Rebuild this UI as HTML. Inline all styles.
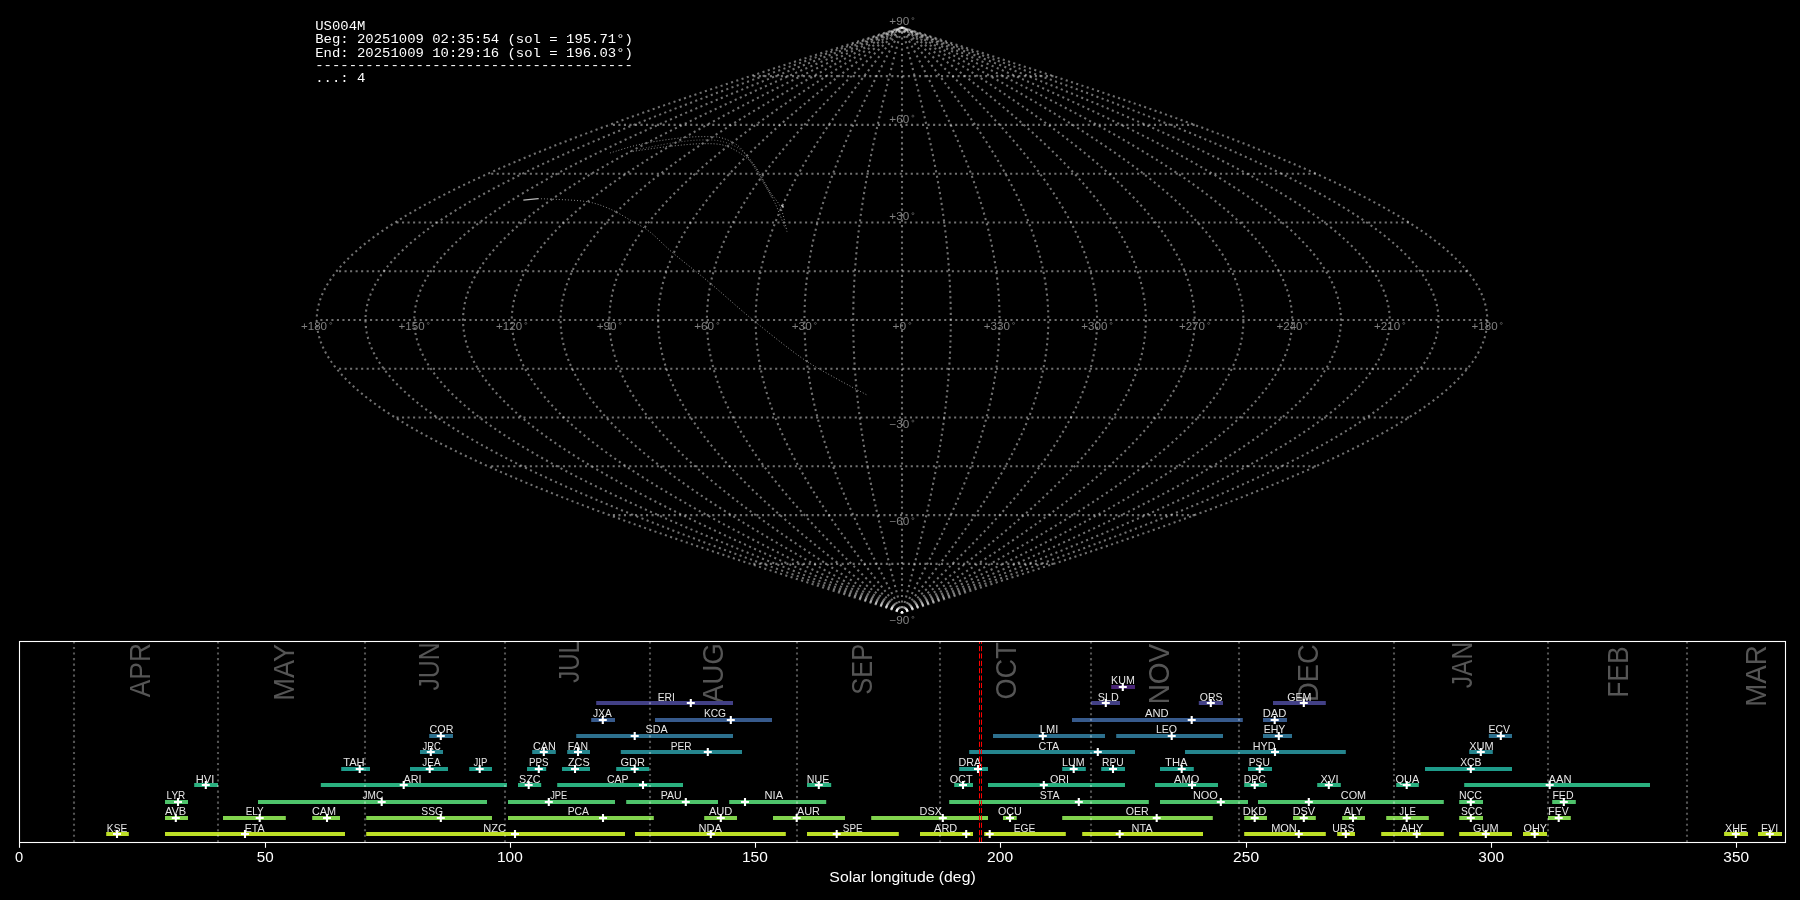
<!DOCTYPE html><html><head><meta charset="utf-8"><style>html,body{margin:0;padding:0;background:#000;overflow:hidden}svg{display:block;will-change:transform}text{font-family:"Liberation Sans",sans-serif}</style></head><body><svg width="1800" height="900" viewBox="0 0 1800 900"><rect x="0" y="0" width="1800" height="900" fill="#000"/><g fill="none" stroke="#ffffff" stroke-opacity="0.44" stroke-width="2.0833" stroke-dasharray="2.0833 3.4375"><path d="M1053.49 563.88L750.51 563.88"/><path d="M1194.65 515.10L609.35 515.10"/><path d="M1315.87 466.33L488.13 466.33"/><path d="M1408.89 417.55L395.11 417.55"/><path d="M1467.36 368.78L336.64 368.78"/><path d="M1487.31 320.00L316.69 320.00"/><path d="M1467.36 271.22L336.64 271.22"/><path d="M1408.89 222.45L395.11 222.45"/><path d="M1315.87 173.67L488.13 173.67"/><path d="M1194.65 124.90L609.35 124.90"/><path d="M1053.49 76.12L750.51 76.12"/><path stroke-dashoffset="1.0" d="M902.00 612.65L912.21 609.40L922.43 606.15L932.63 602.90L942.83 599.65L953.01 596.39L963.18 593.14L973.33 589.89L983.46 586.64L993.56 583.39L1003.64 580.14L1013.68 576.88L1023.69 573.63L1033.67 570.38L1043.60 567.13L1053.49 563.88L1063.33 560.63L1073.13 557.37L1082.87 554.12L1092.56 550.87L1102.19 547.62L1111.75 544.37L1121.26 541.12L1130.70 537.86L1140.07 534.61L1149.36 531.36L1158.58 528.11L1167.72 524.86L1176.78 521.61L1185.76 518.35L1194.65 515.10L1203.45 511.85L1212.16 508.60L1220.78 505.35L1229.30 502.10L1237.72 498.84L1246.03 495.59L1254.25 492.34L1262.35 489.09L1270.35 485.84L1278.23 482.59L1286.00 479.33L1293.65 476.08L1301.18 472.83L1308.59 469.58L1315.87 466.33L1323.03 463.07L1330.07 459.82L1336.97 456.57L1343.74 453.32L1350.37 450.07L1356.87 446.82L1363.23 443.56L1369.45 440.31L1375.52 437.06L1381.45 433.81L1387.24 430.56L1392.88 427.31L1398.37 424.05L1403.71 420.80L1408.89 417.55L1413.92 414.30L1418.79 411.05L1423.51 407.80L1428.07 404.54L1432.47 401.29L1436.70 398.04L1440.78 394.79L1444.69 391.54L1448.43 388.29L1452.01 385.03L1455.42 381.78L1458.66 378.53L1461.73 375.28L1464.63 372.03L1467.36 368.78L1469.92 365.52L1472.30 362.27L1474.52 359.02L1476.55 355.77L1478.41 352.52L1480.10 349.27L1481.61 346.01L1482.94 342.76L1484.10 339.51L1485.08 336.26L1485.88 333.01L1486.50 329.76L1486.95 326.50L1487.22 323.25L1487.31 320.00L1487.22 316.75L1486.95 313.50L1486.50 310.24L1485.88 306.99L1485.08 303.74L1484.10 300.49L1482.94 297.24L1481.61 293.99L1480.10 290.73L1478.41 287.48L1476.55 284.23L1474.52 280.98L1472.30 277.73L1469.92 274.48L1467.36 271.22L1464.63 267.97L1461.73 264.72L1458.66 261.47L1455.42 258.22L1452.01 254.97L1448.43 251.71L1444.69 248.46L1440.78 245.21L1436.70 241.96L1432.47 238.71L1428.07 235.46L1423.51 232.20L1418.79 228.95L1413.92 225.70L1408.89 222.45L1403.71 219.20L1398.37 215.95L1392.88 212.69L1387.24 209.44L1381.45 206.19L1375.52 202.94L1369.45 199.69L1363.23 196.44L1356.87 193.18L1350.37 189.93L1343.74 186.68L1336.97 183.43L1330.07 180.18L1323.03 176.93L1315.87 173.67L1308.59 170.42L1301.18 167.17L1293.65 163.92L1286.00 160.67L1278.23 157.41L1270.35 154.16L1262.35 150.91L1254.25 147.66L1246.03 144.41L1237.72 141.16L1229.30 137.90L1220.78 134.65L1212.16 131.40L1203.45 128.15L1194.65 124.90L1185.76 121.65L1176.78 118.39L1167.72 115.14L1158.58 111.89L1149.36 108.64L1140.07 105.39L1130.70 102.14L1121.26 98.88L1111.75 95.63L1102.19 92.38L1092.56 89.13L1082.87 85.88L1073.13 82.63L1063.33 79.37L1053.49 76.12L1043.60 72.87L1033.67 69.62L1023.69 66.37L1013.68 63.12L1003.64 59.86L993.56 56.61L983.46 53.36L973.33 50.11L963.18 46.86L953.01 43.61L942.83 40.35L932.63 37.10L922.43 33.85L912.21 30.60L902.00 27.35"/><path stroke-dashoffset="1.0" d="M902.00 612.65L911.36 609.40L920.72 606.15L930.08 602.90L939.43 599.65L948.76 596.39L958.08 593.14L967.39 589.89L976.67 586.64L985.93 583.39L995.17 580.14L1004.37 576.88L1013.55 573.63L1022.69 570.38L1031.80 567.13L1040.86 563.88L1049.89 560.63L1058.87 557.37L1067.80 554.12L1076.68 550.87L1085.50 547.62L1094.28 544.37L1102.99 541.12L1111.64 537.86L1120.23 534.61L1128.75 531.36L1137.20 528.11L1145.58 524.86L1153.89 521.61L1162.12 518.35L1170.27 515.10L1178.33 511.85L1186.32 508.60L1194.22 505.35L1202.02 502.10L1209.74 498.84L1217.36 495.59L1224.89 492.34L1232.32 489.09L1239.65 485.84L1246.88 482.59L1254.00 479.33L1261.01 476.08L1267.91 472.83L1274.71 469.58L1281.38 466.33L1287.95 463.07L1294.39 459.82L1300.72 456.57L1306.92 453.32L1313.01 450.07L1318.96 446.82L1324.79 443.56L1330.49 440.31L1336.06 437.06L1341.50 433.81L1346.80 430.56L1351.97 427.31L1357.00 424.05L1361.90 420.80L1366.65 417.55L1371.26 414.30L1375.73 411.05L1380.05 407.80L1384.23 404.54L1388.26 401.29L1392.15 398.04L1395.88 394.79L1399.46 391.54L1402.89 388.29L1406.17 385.03L1409.30 381.78L1412.27 378.53L1415.09 375.28L1417.75 372.03L1420.25 368.78L1422.59 365.52L1424.78 362.27L1426.81 359.02L1428.67 355.77L1430.38 352.52L1431.92 349.27L1433.31 346.01L1434.53 342.76L1435.59 339.51L1436.49 336.26L1437.22 333.01L1437.80 329.76L1438.20 326.50L1438.45 323.25L1438.53 320.00L1438.45 316.75L1438.20 313.50L1437.80 310.24L1437.22 306.99L1436.49 303.74L1435.59 300.49L1434.53 297.24L1433.31 293.99L1431.92 290.73L1430.38 287.48L1428.67 284.23L1426.81 280.98L1424.78 277.73L1422.59 274.48L1420.25 271.22L1417.75 267.97L1415.09 264.72L1412.27 261.47L1409.30 258.22L1406.17 254.97L1402.89 251.71L1399.46 248.46L1395.88 245.21L1392.15 241.96L1388.26 238.71L1384.23 235.46L1380.05 232.20L1375.73 228.95L1371.26 225.70L1366.65 222.45L1361.90 219.20L1357.00 215.95L1351.97 212.69L1346.80 209.44L1341.50 206.19L1336.06 202.94L1330.49 199.69L1324.79 196.44L1318.96 193.18L1313.01 189.93L1306.92 186.68L1300.72 183.43L1294.39 180.18L1287.95 176.93L1281.38 173.67L1274.71 170.42L1267.91 167.17L1261.01 163.92L1254.00 160.67L1246.88 157.41L1239.65 154.16L1232.32 150.91L1224.89 147.66L1217.36 144.41L1209.74 141.16L1202.02 137.90L1194.22 134.65L1186.32 131.40L1178.33 128.15L1170.27 124.90L1162.12 121.65L1153.89 118.39L1145.58 115.14L1137.20 111.89L1128.75 108.64L1120.23 105.39L1111.64 102.14L1102.99 98.88L1094.28 95.63L1085.50 92.38L1076.68 89.13L1067.80 85.88L1058.87 82.63L1049.89 79.37L1040.86 76.12L1031.80 72.87L1022.69 69.62L1013.55 66.37L1004.37 63.12L995.17 59.86L985.93 56.61L976.67 53.36L967.39 50.11L958.08 46.86L948.76 43.61L939.43 40.35L930.08 37.10L920.72 33.85L911.36 30.60L902.00 27.35"/><path stroke-dashoffset="1.0" d="M902.00 612.65L910.51 609.40L919.02 606.15L927.53 602.90L936.02 599.65L944.51 596.39L952.98 593.14L961.44 589.89L969.88 586.64L978.30 583.39L986.70 580.14L995.07 576.88L1003.41 573.63L1011.72 570.38L1020.00 567.13L1028.24 563.88L1036.44 560.63L1044.61 557.37L1052.72 554.12L1060.80 550.87L1068.82 547.62L1076.80 544.37L1084.72 541.12L1092.58 537.86L1100.39 534.61L1108.13 531.36L1115.82 528.11L1123.44 524.86L1130.99 521.61L1138.47 518.35L1145.88 515.10L1153.21 511.85L1160.47 508.60L1167.65 505.35L1174.75 502.10L1181.76 498.84L1188.70 495.59L1195.54 492.34L1202.29 489.09L1208.95 485.84L1215.52 482.59L1222.00 479.33L1228.37 476.08L1234.65 472.83L1240.82 469.58L1246.89 466.33L1252.86 463.07L1258.72 459.82L1264.47 456.57L1270.11 453.32L1275.64 450.07L1281.06 446.82L1286.36 443.56L1291.54 440.31L1296.60 437.06L1301.55 433.81L1306.37 430.56L1311.07 427.31L1315.64 424.05L1320.09 420.80L1324.41 417.55L1328.60 414.30L1332.66 411.05L1336.59 407.80L1340.39 404.54L1344.06 401.29L1347.59 398.04L1350.98 394.79L1354.24 391.54L1357.36 388.29L1360.34 385.03L1363.18 381.78L1365.88 378.53L1368.44 375.28L1370.86 372.03L1373.14 368.78L1375.27 365.52L1377.25 362.27L1379.10 359.02L1380.79 355.77L1382.34 352.52L1383.75 349.27L1385.01 346.01L1386.12 342.76L1387.08 339.51L1387.90 336.26L1388.57 333.01L1389.09 329.76L1389.46 326.50L1389.68 323.25L1389.76 320.00L1389.68 316.75L1389.46 313.50L1389.09 310.24L1388.57 306.99L1387.90 303.74L1387.08 300.49L1386.12 297.24L1385.01 293.99L1383.75 290.73L1382.34 287.48L1380.79 284.23L1379.10 280.98L1377.25 277.73L1375.27 274.48L1373.14 271.22L1370.86 267.97L1368.44 264.72L1365.88 261.47L1363.18 258.22L1360.34 254.97L1357.36 251.71L1354.24 248.46L1350.98 245.21L1347.59 241.96L1344.06 238.71L1340.39 235.46L1336.59 232.20L1332.66 228.95L1328.60 225.70L1324.41 222.45L1320.09 219.20L1315.64 215.95L1311.07 212.69L1306.37 209.44L1301.55 206.19L1296.60 202.94L1291.54 199.69L1286.36 196.44L1281.06 193.18L1275.64 189.93L1270.11 186.68L1264.47 183.43L1258.72 180.18L1252.86 176.93L1246.89 173.67L1240.82 170.42L1234.65 167.17L1228.37 163.92L1222.00 160.67L1215.52 157.41L1208.95 154.16L1202.29 150.91L1195.54 147.66L1188.70 144.41L1181.76 141.16L1174.75 137.90L1167.65 134.65L1160.47 131.40L1153.21 128.15L1145.88 124.90L1138.47 121.65L1130.99 118.39L1123.44 115.14L1115.82 111.89L1108.13 108.64L1100.39 105.39L1092.58 102.14L1084.72 98.88L1076.80 95.63L1068.82 92.38L1060.80 89.13L1052.72 85.88L1044.61 82.63L1036.44 79.37L1028.24 76.12L1020.00 72.87L1011.72 69.62L1003.41 66.37L995.07 63.12L986.70 59.86L978.30 56.61L969.88 53.36L961.44 50.11L952.98 46.86L944.51 43.61L936.02 40.35L927.53 37.10L919.02 33.85L910.51 30.60L902.00 27.35"/><path stroke-dashoffset="1.0" d="M902.00 612.65L909.66 609.40L917.32 606.15L924.97 602.90L932.62 599.65L940.26 596.39L947.89 593.14L955.50 589.89L963.09 586.64L970.67 583.39L978.23 580.14L985.76 576.88L993.27 573.63L1000.75 570.38L1008.20 567.13L1015.62 563.88L1023.00 560.63L1030.35 557.37L1037.65 554.12L1044.92 550.87L1052.14 547.62L1059.32 544.37L1066.44 541.12L1073.52 537.86L1080.55 534.61L1087.52 531.36L1094.44 528.11L1101.29 524.86L1108.09 521.61L1114.82 518.35L1121.49 515.10L1128.09 511.85L1134.62 508.60L1141.09 505.35L1147.47 502.10L1153.79 498.84L1160.03 495.59L1166.18 492.34L1172.26 489.09L1178.26 485.84L1184.17 482.59L1190.00 479.33L1195.73 476.08L1201.38 472.83L1206.94 469.58L1212.41 466.33L1217.78 463.07L1223.05 459.82L1228.23 456.57L1233.30 453.32L1238.28 450.07L1243.15 446.82L1247.92 443.56L1252.58 440.31L1257.14 437.06L1261.59 433.81L1265.93 430.56L1270.16 427.31L1274.28 424.05L1278.28 420.80L1282.17 417.55L1285.94 414.30L1289.60 411.05L1293.13 407.80L1296.55 404.54L1299.85 401.29L1303.03 398.04L1306.08 394.79L1309.01 391.54L1311.82 388.29L1314.51 385.03L1317.06 381.78L1319.49 378.53L1321.80 375.28L1323.97 372.03L1326.02 368.78L1327.94 365.52L1329.73 362.27L1331.39 359.02L1332.91 355.77L1334.31 352.52L1335.57 349.27L1336.71 346.01L1337.71 342.76L1338.57 339.51L1339.31 336.26L1339.91 333.01L1340.38 329.76L1340.71 326.50L1340.91 323.25L1340.98 320.00L1340.91 316.75L1340.71 313.50L1340.38 310.24L1339.91 306.99L1339.31 303.74L1338.57 300.49L1337.71 297.24L1336.71 293.99L1335.57 290.73L1334.31 287.48L1332.91 284.23L1331.39 280.98L1329.73 277.73L1327.94 274.48L1326.02 271.22L1323.97 267.97L1321.80 264.72L1319.49 261.47L1317.06 258.22L1314.51 254.97L1311.82 251.71L1309.01 248.46L1306.08 245.21L1303.03 241.96L1299.85 238.71L1296.55 235.46L1293.13 232.20L1289.60 228.95L1285.94 225.70L1282.17 222.45L1278.28 219.20L1274.28 215.95L1270.16 212.69L1265.93 209.44L1261.59 206.19L1257.14 202.94L1252.58 199.69L1247.92 196.44L1243.15 193.18L1238.28 189.93L1233.30 186.68L1228.23 183.43L1223.05 180.18L1217.78 176.93L1212.41 173.67L1206.94 170.42L1201.38 167.17L1195.73 163.92L1190.00 160.67L1184.17 157.41L1178.26 154.16L1172.26 150.91L1166.18 147.66L1160.03 144.41L1153.79 141.16L1147.47 137.90L1141.09 134.65L1134.62 131.40L1128.09 128.15L1121.49 124.90L1114.82 121.65L1108.09 118.39L1101.29 115.14L1094.44 111.89L1087.52 108.64L1080.55 105.39L1073.52 102.14L1066.44 98.88L1059.32 95.63L1052.14 92.38L1044.92 89.13L1037.65 85.88L1030.35 82.63L1023.00 79.37L1015.62 76.12L1008.20 72.87L1000.75 69.62L993.27 66.37L985.76 63.12L978.23 59.86L970.67 56.61L963.09 53.36L955.50 50.11L947.89 46.86L940.26 43.61L932.62 40.35L924.97 37.10L917.32 33.85L909.66 30.60L902.00 27.35"/><path stroke-dashoffset="1.0" d="M902.00 612.65L908.81 609.40L915.62 606.15L922.42 602.90L929.22 599.65L936.01 596.39L942.79 593.14L949.55 589.89L956.31 586.64L963.04 583.39L969.76 580.14L976.45 576.88L983.13 573.63L989.78 570.38L996.40 567.13L1002.99 563.88L1009.55 560.63L1016.08 557.37L1022.58 554.12L1029.04 550.87L1035.46 547.62L1041.84 544.37L1048.17 541.12L1054.46 537.86L1060.71 534.61L1066.91 531.36L1073.05 528.11L1079.15 524.86L1085.19 521.61L1091.17 518.35L1097.10 515.10L1102.97 511.85L1108.78 508.60L1114.52 505.35L1120.20 502.10L1125.81 498.84L1131.36 495.59L1136.83 492.34L1142.23 489.09L1147.56 485.84L1152.82 482.59L1158.00 479.33L1163.10 476.08L1168.12 472.83L1173.06 469.58L1177.92 466.33L1182.69 463.07L1187.38 459.82L1191.98 456.57L1196.49 453.32L1200.91 450.07L1205.25 446.82L1209.48 443.56L1213.63 440.31L1217.68 437.06L1221.64 433.81L1225.49 430.56L1229.25 427.31L1232.91 424.05L1236.47 420.80L1239.93 417.55L1243.28 414.30L1246.53 411.05L1249.67 407.80L1252.71 404.54L1255.64 401.29L1258.47 398.04L1261.18 394.79L1263.79 391.54L1266.29 388.29L1268.67 385.03L1270.95 381.78L1273.11 378.53L1275.15 375.28L1277.09 372.03L1278.91 368.78L1280.61 365.52L1282.20 362.27L1283.68 359.02L1285.03 355.77L1286.28 352.52L1287.40 349.27L1288.41 346.01L1289.30 342.76L1290.07 339.51L1290.72 336.26L1291.25 333.01L1291.67 329.76L1291.97 326.50L1292.14 323.25L1292.20 320.00L1292.14 316.75L1291.97 313.50L1291.67 310.24L1291.25 306.99L1290.72 303.74L1290.07 300.49L1289.30 297.24L1288.41 293.99L1287.40 290.73L1286.28 287.48L1285.03 284.23L1283.68 280.98L1282.20 277.73L1280.61 274.48L1278.91 271.22L1277.09 267.97L1275.15 264.72L1273.11 261.47L1270.95 258.22L1268.67 254.97L1266.29 251.71L1263.79 248.46L1261.18 245.21L1258.47 241.96L1255.64 238.71L1252.71 235.46L1249.67 232.20L1246.53 228.95L1243.28 225.70L1239.93 222.45L1236.47 219.20L1232.91 215.95L1229.25 212.69L1225.49 209.44L1221.64 206.19L1217.68 202.94L1213.63 199.69L1209.48 196.44L1205.25 193.18L1200.91 189.93L1196.49 186.68L1191.98 183.43L1187.38 180.18L1182.69 176.93L1177.92 173.67L1173.06 170.42L1168.12 167.17L1163.10 163.92L1158.00 160.67L1152.82 157.41L1147.56 154.16L1142.23 150.91L1136.83 147.66L1131.36 144.41L1125.81 141.16L1120.20 137.90L1114.52 134.65L1108.78 131.40L1102.97 128.15L1097.10 124.90L1091.17 121.65L1085.19 118.39L1079.15 115.14L1073.05 111.89L1066.91 108.64L1060.71 105.39L1054.46 102.14L1048.17 98.88L1041.84 95.63L1035.46 92.38L1029.04 89.13L1022.58 85.88L1016.08 82.63L1009.55 79.37L1002.99 76.12L996.40 72.87L989.78 69.62L983.13 66.37L976.45 63.12L969.76 59.86L963.04 56.61L956.31 53.36L949.55 50.11L942.79 46.86L936.01 43.61L929.22 40.35L922.42 37.10L915.62 33.85L908.81 30.60L902.00 27.35"/><path stroke-dashoffset="1.0" d="M902.00 612.65L907.96 609.40L913.92 606.15L919.87 602.90L925.82 599.65L931.76 596.39L937.69 593.14L943.61 589.89L949.52 586.64L955.41 583.39L961.29 580.14L967.15 576.88L972.99 573.63L978.80 570.38L984.60 567.13L990.37 563.88L996.11 560.63L1001.82 557.37L1007.51 554.12L1013.16 550.87L1018.78 547.62L1024.36 544.37L1029.90 541.12L1035.41 537.86L1040.87 534.61L1046.29 531.36L1051.67 528.11L1057.01 524.86L1062.29 521.61L1067.53 518.35L1072.71 515.10L1077.85 511.85L1082.93 508.60L1087.96 505.35L1092.92 502.10L1097.84 498.84L1102.69 495.59L1107.48 492.34L1112.20 489.09L1116.87 485.84L1121.47 482.59L1126.00 479.33L1130.46 476.08L1134.85 472.83L1139.18 469.58L1143.43 466.33L1147.60 463.07L1151.70 459.82L1155.73 456.57L1159.68 453.32L1163.55 450.07L1167.34 446.82L1171.05 443.56L1174.68 440.31L1178.22 437.06L1181.68 433.81L1185.06 430.56L1188.35 427.31L1191.55 424.05L1194.66 420.80L1197.69 417.55L1200.62 414.30L1203.46 411.05L1206.22 407.80L1208.87 404.54L1211.44 401.29L1213.91 398.04L1216.29 394.79L1218.57 391.54L1220.75 388.29L1222.84 385.03L1224.83 381.78L1226.72 378.53L1228.51 375.28L1230.20 372.03L1231.79 368.78L1233.29 365.52L1234.68 362.27L1235.97 359.02L1237.16 355.77L1238.24 352.52L1239.22 349.27L1240.11 346.01L1240.88 342.76L1241.56 339.51L1242.13 336.26L1242.60 333.01L1242.96 329.76L1243.22 326.50L1243.38 323.25L1243.43 320.00L1243.38 316.75L1243.22 313.50L1242.96 310.24L1242.60 306.99L1242.13 303.74L1241.56 300.49L1240.88 297.24L1240.11 293.99L1239.22 290.73L1238.24 287.48L1237.16 284.23L1235.97 280.98L1234.68 277.73L1233.29 274.48L1231.79 271.22L1230.20 267.97L1228.51 264.72L1226.72 261.47L1224.83 258.22L1222.84 254.97L1220.75 251.71L1218.57 248.46L1216.29 245.21L1213.91 241.96L1211.44 238.71L1208.87 235.46L1206.22 232.20L1203.46 228.95L1200.62 225.70L1197.69 222.45L1194.66 219.20L1191.55 215.95L1188.35 212.69L1185.06 209.44L1181.68 206.19L1178.22 202.94L1174.68 199.69L1171.05 196.44L1167.34 193.18L1163.55 189.93L1159.68 186.68L1155.73 183.43L1151.70 180.18L1147.60 176.93L1143.43 173.67L1139.18 170.42L1134.85 167.17L1130.46 163.92L1126.00 160.67L1121.47 157.41L1116.87 154.16L1112.20 150.91L1107.48 147.66L1102.69 144.41L1097.84 141.16L1092.92 137.90L1087.96 134.65L1082.93 131.40L1077.85 128.15L1072.71 124.90L1067.53 121.65L1062.29 118.39L1057.01 115.14L1051.67 111.89L1046.29 108.64L1040.87 105.39L1035.41 102.14L1029.90 98.88L1024.36 95.63L1018.78 92.38L1013.16 89.13L1007.51 85.88L1001.82 82.63L996.11 79.37L990.37 76.12L984.60 72.87L978.80 69.62L972.99 66.37L967.15 63.12L961.29 59.86L955.41 56.61L949.52 53.36L943.61 50.11L937.69 46.86L931.76 43.61L925.82 40.35L919.87 37.10L913.92 33.85L907.96 30.60L902.00 27.35"/><path stroke-dashoffset="1.0" d="M902.00 612.65L907.11 609.40L912.21 606.15L917.32 602.90L922.41 599.65L927.51 596.39L932.59 593.14L937.67 589.89L942.73 586.64L947.78 583.39L952.82 580.14L957.84 576.88L962.85 573.63L967.83 570.38L972.80 567.13L977.74 563.88L982.67 560.63L987.56 557.37L992.43 554.12L997.28 550.87L1002.09 547.62L1006.88 544.37L1011.63 541.12L1016.35 537.86L1021.03 534.61L1025.68 531.36L1030.29 528.11L1034.86 524.86L1039.39 521.61L1043.88 518.35L1048.33 515.10L1052.73 511.85L1057.08 508.60L1061.39 505.35L1065.65 502.10L1069.86 498.84L1074.02 495.59L1078.12 492.34L1082.18 489.09L1086.17 485.84L1090.11 482.59L1094.00 479.33L1097.82 476.08L1101.59 472.83L1105.29 469.58L1108.94 466.33L1112.52 463.07L1116.03 459.82L1119.48 456.57L1122.87 453.32L1126.19 450.07L1129.43 446.82L1132.61 443.56L1135.72 440.31L1138.76 437.06L1141.73 433.81L1144.62 430.56L1147.44 427.31L1150.18 424.05L1152.85 420.80L1155.44 417.55L1157.96 414.30L1160.40 411.05L1162.76 407.80L1165.03 404.54L1167.23 401.29L1169.35 398.04L1171.39 394.79L1173.34 391.54L1175.22 388.29L1177.00 385.03L1178.71 381.78L1180.33 378.53L1181.87 375.28L1183.32 372.03L1184.68 368.78L1185.96 365.52L1187.15 362.27L1188.26 359.02L1189.28 355.77L1190.21 352.52L1191.05 349.27L1191.80 346.01L1192.47 342.76L1193.05 339.51L1193.54 336.26L1193.94 333.01L1194.25 329.76L1194.47 326.50L1194.61 323.25L1194.65 320.00L1194.61 316.75L1194.47 313.50L1194.25 310.24L1193.94 306.99L1193.54 303.74L1193.05 300.49L1192.47 297.24L1191.80 293.99L1191.05 290.73L1190.21 287.48L1189.28 284.23L1188.26 280.98L1187.15 277.73L1185.96 274.48L1184.68 271.22L1183.32 267.97L1181.87 264.72L1180.33 261.47L1178.71 258.22L1177.00 254.97L1175.22 251.71L1173.34 248.46L1171.39 245.21L1169.35 241.96L1167.23 238.71L1165.03 235.46L1162.76 232.20L1160.40 228.95L1157.96 225.70L1155.44 222.45L1152.85 219.20L1150.18 215.95L1147.44 212.69L1144.62 209.44L1141.73 206.19L1138.76 202.94L1135.72 199.69L1132.61 196.44L1129.43 193.18L1126.19 189.93L1122.87 186.68L1119.48 183.43L1116.03 180.18L1112.52 176.93L1108.94 173.67L1105.29 170.42L1101.59 167.17L1097.82 163.92L1094.00 160.67L1090.11 157.41L1086.17 154.16L1082.18 150.91L1078.12 147.66L1074.02 144.41L1069.86 141.16L1065.65 137.90L1061.39 134.65L1057.08 131.40L1052.73 128.15L1048.33 124.90L1043.88 121.65L1039.39 118.39L1034.86 115.14L1030.29 111.89L1025.68 108.64L1021.03 105.39L1016.35 102.14L1011.63 98.88L1006.88 95.63L1002.09 92.38L997.28 89.13L992.43 85.88L987.56 82.63L982.67 79.37L977.74 76.12L972.80 72.87L967.83 69.62L962.85 66.37L957.84 63.12L952.82 59.86L947.78 56.61L942.73 53.36L937.67 50.11L932.59 46.86L927.51 43.61L922.41 40.35L917.32 37.10L912.21 33.85L907.11 30.60L902.00 27.35"/><path stroke-dashoffset="1.0" d="M902.00 612.65L906.26 609.40L910.51 606.15L914.76 602.90L919.01 599.65L923.26 596.39L927.49 593.14L931.72 589.89L935.94 586.64L940.15 583.39L944.35 580.14L948.53 576.88L952.70 573.63L956.86 570.38L961.00 567.13L965.12 563.88L969.22 560.63L973.30 557.37L977.36 554.12L981.40 550.87L985.41 547.62L989.40 544.37L993.36 541.12L997.29 537.86L1001.19 534.61L1005.07 531.36L1008.91 528.11L1012.72 524.86L1016.49 521.61L1020.23 518.35L1023.94 515.10L1027.61 511.85L1031.24 508.60L1034.83 505.35L1038.37 502.10L1041.88 498.84L1045.35 495.59L1048.77 492.34L1052.15 489.09L1055.48 485.84L1058.76 482.59L1062.00 479.33L1065.19 476.08L1068.32 472.83L1071.41 469.58L1074.45 466.33L1077.43 463.07L1080.36 459.82L1083.24 456.57L1086.06 453.32L1088.82 450.07L1091.53 446.82L1094.18 443.56L1096.77 440.31L1099.30 437.06L1101.77 433.81L1104.18 430.56L1106.53 427.31L1108.82 424.05L1111.04 420.80L1113.20 417.55L1115.30 414.30L1117.33 411.05L1119.30 407.80L1121.20 404.54L1123.03 401.29L1124.79 398.04L1126.49 394.79L1128.12 391.54L1129.68 388.29L1131.17 385.03L1132.59 381.78L1133.94 378.53L1135.22 375.28L1136.43 372.03L1137.57 368.78L1138.63 365.52L1139.63 362.27L1140.55 359.02L1141.40 355.77L1142.17 352.52L1142.87 349.27L1143.50 346.01L1144.06 342.76L1144.54 339.51L1144.95 336.26L1145.28 333.01L1145.54 329.76L1145.73 326.50L1145.84 323.25L1145.88 320.00L1145.84 316.75L1145.73 313.50L1145.54 310.24L1145.28 306.99L1144.95 303.74L1144.54 300.49L1144.06 297.24L1143.50 293.99L1142.87 290.73L1142.17 287.48L1141.40 284.23L1140.55 280.98L1139.63 277.73L1138.63 274.48L1137.57 271.22L1136.43 267.97L1135.22 264.72L1133.94 261.47L1132.59 258.22L1131.17 254.97L1129.68 251.71L1128.12 248.46L1126.49 245.21L1124.79 241.96L1123.03 238.71L1121.20 235.46L1119.30 232.20L1117.33 228.95L1115.30 225.70L1113.20 222.45L1111.04 219.20L1108.82 215.95L1106.53 212.69L1104.18 209.44L1101.77 206.19L1099.30 202.94L1096.77 199.69L1094.18 196.44L1091.53 193.18L1088.82 189.93L1086.06 186.68L1083.24 183.43L1080.36 180.18L1077.43 176.93L1074.45 173.67L1071.41 170.42L1068.32 167.17L1065.19 163.92L1062.00 160.67L1058.76 157.41L1055.48 154.16L1052.15 150.91L1048.77 147.66L1045.35 144.41L1041.88 141.16L1038.37 137.90L1034.83 134.65L1031.24 131.40L1027.61 128.15L1023.94 124.90L1020.23 121.65L1016.49 118.39L1012.72 115.14L1008.91 111.89L1005.07 108.64L1001.19 105.39L997.29 102.14L993.36 98.88L989.40 95.63L985.41 92.38L981.40 89.13L977.36 85.88L973.30 82.63L969.22 79.37L965.12 76.12L961.00 72.87L956.86 69.62L952.70 66.37L948.53 63.12L944.35 59.86L940.15 56.61L935.94 53.36L931.72 50.11L927.49 46.86L923.26 43.61L919.01 40.35L914.76 37.10L910.51 33.85L906.26 30.60L902.00 27.35"/><path stroke-dashoffset="1.0" d="M902.00 612.65L905.40 609.40L908.81 606.15L912.21 602.90L915.61 599.65L919.00 596.39L922.39 593.14L925.78 589.89L929.15 586.64L932.52 583.39L935.88 580.14L939.23 576.88L942.56 573.63L945.89 570.38L949.20 567.13L952.50 563.88L955.78 560.63L959.04 557.37L962.29 554.12L965.52 550.87L968.73 547.62L971.92 544.37L975.09 541.12L978.23 537.86L981.36 534.61L984.45 531.36L987.53 528.11L990.57 524.86L993.59 521.61L996.59 518.35L999.55 515.10L1002.48 511.85L1005.39 508.60L1008.26 505.35L1011.10 502.10L1013.91 498.84L1016.68 495.59L1019.42 492.34L1022.12 489.09L1024.78 485.84L1027.41 482.59L1030.00 479.33L1032.55 476.08L1035.06 472.83L1037.53 469.58L1039.96 466.33L1042.34 463.07L1044.69 459.82L1046.99 456.57L1049.25 453.32L1051.46 450.07L1053.62 446.82L1055.74 443.56L1057.82 440.31L1059.84 437.06L1061.82 433.81L1063.75 430.56L1065.63 427.31L1067.46 424.05L1069.24 420.80L1070.96 417.55L1072.64 414.30L1074.26 411.05L1075.84 407.80L1077.36 404.54L1078.82 401.29L1080.23 398.04L1081.59 394.79L1082.90 391.54L1084.14 388.29L1085.34 385.03L1086.47 381.78L1087.55 378.53L1088.58 375.28L1089.54 372.03L1090.45 368.78L1091.31 365.52L1092.10 362.27L1092.84 359.02L1093.52 355.77L1094.14 352.52L1094.70 349.27L1095.20 346.01L1095.65 342.76L1096.03 339.51L1096.36 336.26L1096.63 333.01L1096.83 329.76L1096.98 326.50L1097.07 323.25L1097.10 320.00L1097.07 316.75L1096.98 313.50L1096.83 310.24L1096.63 306.99L1096.36 303.74L1096.03 300.49L1095.65 297.24L1095.20 293.99L1094.70 290.73L1094.14 287.48L1093.52 284.23L1092.84 280.98L1092.10 277.73L1091.31 274.48L1090.45 271.22L1089.54 267.97L1088.58 264.72L1087.55 261.47L1086.47 258.22L1085.34 254.97L1084.14 251.71L1082.90 248.46L1081.59 245.21L1080.23 241.96L1078.82 238.71L1077.36 235.46L1075.84 232.20L1074.26 228.95L1072.64 225.70L1070.96 222.45L1069.24 219.20L1067.46 215.95L1065.63 212.69L1063.75 209.44L1061.82 206.19L1059.84 202.94L1057.82 199.69L1055.74 196.44L1053.62 193.18L1051.46 189.93L1049.25 186.68L1046.99 183.43L1044.69 180.18L1042.34 176.93L1039.96 173.67L1037.53 170.42L1035.06 167.17L1032.55 163.92L1030.00 160.67L1027.41 157.41L1024.78 154.16L1022.12 150.91L1019.42 147.66L1016.68 144.41L1013.91 141.16L1011.10 137.90L1008.26 134.65L1005.39 131.40L1002.48 128.15L999.55 124.90L996.59 121.65L993.59 118.39L990.57 115.14L987.53 111.89L984.45 108.64L981.36 105.39L978.23 102.14L975.09 98.88L971.92 95.63L968.73 92.38L965.52 89.13L962.29 85.88L959.04 82.63L955.78 79.37L952.50 76.12L949.20 72.87L945.89 69.62L942.56 66.37L939.23 63.12L935.88 59.86L932.52 56.61L929.15 53.36L925.78 50.11L922.39 46.86L919.00 43.61L915.61 40.35L912.21 37.10L908.81 33.85L905.40 30.60L902.00 27.35"/><path stroke-dashoffset="1.0" d="M902.00 612.65L904.55 609.40L907.11 606.15L909.66 602.90L912.21 599.65L914.75 596.39L917.30 593.14L919.83 589.89L922.36 586.64L924.89 583.39L927.41 580.14L929.92 576.88L932.42 573.63L934.92 570.38L937.40 567.13L939.87 563.88L942.33 560.63L944.78 557.37L947.22 554.12L949.64 550.87L952.05 547.62L954.44 544.37L956.81 541.12L959.17 537.86L961.52 534.61L963.84 531.36L966.15 528.11L968.43 524.86L970.70 521.61L972.94 518.35L975.16 515.10L977.36 511.85L979.54 508.60L981.70 505.35L983.82 502.10L985.93 498.84L988.01 495.59L990.06 492.34L992.09 489.09L994.09 485.84L996.06 482.59L998.00 479.33L999.91 476.08L1001.79 472.83L1003.65 469.58L1005.47 466.33L1007.26 463.07L1009.02 459.82L1010.74 456.57L1012.43 453.32L1014.09 450.07L1015.72 446.82L1017.31 443.56L1018.86 440.31L1020.38 437.06L1021.86 433.81L1023.31 430.56L1024.72 427.31L1026.09 424.05L1027.43 420.80L1028.72 417.55L1029.98 414.30L1031.20 411.05L1032.38 407.80L1033.52 404.54L1034.62 401.29L1035.68 398.04L1036.69 394.79L1037.67 391.54L1038.61 388.29L1039.50 385.03L1040.35 381.78L1041.16 378.53L1041.93 375.28L1042.66 372.03L1043.34 368.78L1043.98 365.52L1044.58 362.27L1045.13 359.02L1045.64 355.77L1046.10 352.52L1046.52 349.27L1046.90 346.01L1047.24 342.76L1047.52 339.51L1047.77 336.26L1047.97 333.01L1048.13 329.76L1048.24 326.50L1048.30 323.25L1048.33 320.00L1048.30 316.75L1048.24 313.50L1048.13 310.24L1047.97 306.99L1047.77 303.74L1047.52 300.49L1047.24 297.24L1046.90 293.99L1046.52 290.73L1046.10 287.48L1045.64 284.23L1045.13 280.98L1044.58 277.73L1043.98 274.48L1043.34 271.22L1042.66 267.97L1041.93 264.72L1041.16 261.47L1040.35 258.22L1039.50 254.97L1038.61 251.71L1037.67 248.46L1036.69 245.21L1035.68 241.96L1034.62 238.71L1033.52 235.46L1032.38 232.20L1031.20 228.95L1029.98 225.70L1028.72 222.45L1027.43 219.20L1026.09 215.95L1024.72 212.69L1023.31 209.44L1021.86 206.19L1020.38 202.94L1018.86 199.69L1017.31 196.44L1015.72 193.18L1014.09 189.93L1012.43 186.68L1010.74 183.43L1009.02 180.18L1007.26 176.93L1005.47 173.67L1003.65 170.42L1001.79 167.17L999.91 163.92L998.00 160.67L996.06 157.41L994.09 154.16L992.09 150.91L990.06 147.66L988.01 144.41L985.93 141.16L983.82 137.90L981.70 134.65L979.54 131.40L977.36 128.15L975.16 124.90L972.94 121.65L970.70 118.39L968.43 115.14L966.15 111.89L963.84 108.64L961.52 105.39L959.17 102.14L956.81 98.88L954.44 95.63L952.05 92.38L949.64 89.13L947.22 85.88L944.78 82.63L942.33 79.37L939.87 76.12L937.40 72.87L934.92 69.62L932.42 66.37L929.92 63.12L927.41 59.86L924.89 56.61L922.36 53.36L919.83 50.11L917.30 46.86L914.75 43.61L912.21 40.35L909.66 37.10L907.11 33.85L904.55 30.60L902.00 27.35"/><path stroke-dashoffset="1.0" d="M902.00 612.65L903.70 609.40L905.40 606.15L907.11 602.90L908.80 599.65L910.50 596.39L912.20 593.14L913.89 589.89L915.58 586.64L917.26 583.39L918.94 580.14L920.61 576.88L922.28 573.63L923.94 570.38L925.60 567.13L927.25 563.88L928.89 560.63L930.52 557.37L932.14 554.12L933.76 550.87L935.36 547.62L936.96 544.37L938.54 541.12L940.12 537.86L941.68 534.61L943.23 531.36L944.76 528.11L946.29 524.86L947.80 521.61L949.29 518.35L950.78 515.10L952.24 511.85L953.69 508.60L955.13 505.35L956.55 502.10L957.95 498.84L959.34 495.59L960.71 492.34L962.06 489.09L963.39 485.84L964.70 482.59L966.00 479.33L967.27 476.08L968.53 472.83L969.76 469.58L970.98 466.33L972.17 463.07L973.34 459.82L974.49 456.57L975.62 453.32L976.73 450.07L977.81 446.82L978.87 443.56L979.91 440.31L980.92 437.06L981.91 433.81L982.87 430.56L983.81 427.31L984.73 424.05L985.62 420.80L986.48 417.55L987.32 414.30L988.13 411.05L988.92 407.80L989.68 404.54L990.41 401.29L991.12 398.04L991.80 394.79L992.45 391.54L993.07 388.29L993.67 385.03L994.24 381.78L994.78 378.53L995.29 375.28L995.77 372.03L996.23 368.78L996.65 365.52L997.05 362.27L997.42 359.02L997.76 355.77L998.07 352.52L998.35 349.27L998.60 346.01L998.82 342.76L999.02 339.51L999.18 336.26L999.31 333.01L999.42 329.76L999.49 326.50L999.54 323.25L999.55 320.00L999.54 316.75L999.49 313.50L999.42 310.24L999.31 306.99L999.18 303.74L999.02 300.49L998.82 297.24L998.60 293.99L998.35 290.73L998.07 287.48L997.76 284.23L997.42 280.98L997.05 277.73L996.65 274.48L996.23 271.22L995.77 267.97L995.29 264.72L994.78 261.47L994.24 258.22L993.67 254.97L993.07 251.71L992.45 248.46L991.80 245.21L991.12 241.96L990.41 238.71L989.68 235.46L988.92 232.20L988.13 228.95L987.32 225.70L986.48 222.45L985.62 219.20L984.73 215.95L983.81 212.69L982.87 209.44L981.91 206.19L980.92 202.94L979.91 199.69L978.87 196.44L977.81 193.18L976.73 189.93L975.62 186.68L974.49 183.43L973.34 180.18L972.17 176.93L970.98 173.67L969.76 170.42L968.53 167.17L967.27 163.92L966.00 160.67L964.70 157.41L963.39 154.16L962.06 150.91L960.71 147.66L959.34 144.41L957.95 141.16L956.55 137.90L955.13 134.65L953.69 131.40L952.24 128.15L950.78 124.90L949.29 121.65L947.80 118.39L946.29 115.14L944.76 111.89L943.23 108.64L941.68 105.39L940.12 102.14L938.54 98.88L936.96 95.63L935.36 92.38L933.76 89.13L932.14 85.88L930.52 82.63L928.89 79.37L927.25 76.12L925.60 72.87L923.94 69.62L922.28 66.37L920.61 63.12L918.94 59.86L917.26 56.61L915.58 53.36L913.89 50.11L912.20 46.86L910.50 43.61L908.80 40.35L907.11 37.10L905.40 33.85L903.70 30.60L902.00 27.35"/><path stroke-dashoffset="1.0" d="M902.00 612.65L902.85 609.40L903.70 606.15L904.55 602.90L905.40 599.65L906.25 596.39L907.10 593.14L907.94 589.89L908.79 586.64L909.63 583.39L910.47 580.14L911.31 576.88L912.14 573.63L912.97 570.38L913.80 567.13L914.62 563.88L915.44 560.63L916.26 557.37L917.07 554.12L917.88 550.87L918.68 547.62L919.48 544.37L920.27 541.12L921.06 537.86L921.84 534.61L922.61 531.36L923.38 528.11L924.14 524.86L924.90 521.61L925.65 518.35L926.39 515.10L927.12 511.85L927.85 508.60L928.57 505.35L929.27 502.10L929.98 498.84L930.67 495.59L931.35 492.34L932.03 489.09L932.70 485.84L933.35 482.59L934.00 479.33L934.64 476.08L935.26 472.83L935.88 469.58L936.49 466.33L937.09 463.07L937.67 459.82L938.25 456.57L938.81 453.32L939.36 450.07L939.91 446.82L940.44 443.56L940.95 440.31L941.46 437.06L941.95 433.81L942.44 430.56L942.91 427.31L943.36 424.05L943.81 420.80L944.24 417.55L944.66 414.30L945.07 411.05L945.46 407.80L945.84 404.54L946.21 401.29L946.56 398.04L946.90 394.79L947.22 391.54L947.54 388.29L947.83 385.03L948.12 381.78L948.39 378.53L948.64 375.28L948.89 372.03L949.11 368.78L949.33 365.52L949.53 362.27L949.71 359.02L949.88 355.77L950.03 352.52L950.17 349.27L950.30 346.01L950.41 342.76L950.51 339.51L950.59 336.26L950.66 333.01L950.71 329.76L950.75 326.50L950.77 323.25L950.78 320.00L950.77 316.75L950.75 313.50L950.71 310.24L950.66 306.99L950.59 303.74L950.51 300.49L950.41 297.24L950.30 293.99L950.17 290.73L950.03 287.48L949.88 284.23L949.71 280.98L949.53 277.73L949.33 274.48L949.11 271.22L948.89 267.97L948.64 264.72L948.39 261.47L948.12 258.22L947.83 254.97L947.54 251.71L947.22 248.46L946.90 245.21L946.56 241.96L946.21 238.71L945.84 235.46L945.46 232.20L945.07 228.95L944.66 225.70L944.24 222.45L943.81 219.20L943.36 215.95L942.91 212.69L942.44 209.44L941.95 206.19L941.46 202.94L940.95 199.69L940.44 196.44L939.91 193.18L939.36 189.93L938.81 186.68L938.25 183.43L937.67 180.18L937.09 176.93L936.49 173.67L935.88 170.42L935.26 167.17L934.64 163.92L934.00 160.67L933.35 157.41L932.70 154.16L932.03 150.91L931.35 147.66L930.67 144.41L929.98 141.16L929.27 137.90L928.57 134.65L927.85 131.40L927.12 128.15L926.39 124.90L925.65 121.65L924.90 118.39L924.14 115.14L923.38 111.89L922.61 108.64L921.84 105.39L921.06 102.14L920.27 98.88L919.48 95.63L918.68 92.38L917.88 89.13L917.07 85.88L916.26 82.63L915.44 79.37L914.62 76.12L913.80 72.87L912.97 69.62L912.14 66.37L911.31 63.12L910.47 59.86L909.63 56.61L908.79 53.36L907.94 50.11L907.10 46.86L906.25 43.61L905.40 40.35L904.55 37.10L903.70 33.85L902.85 30.60L902.00 27.35"/><path stroke-dashoffset="1.0" d="M902.00 612.65L902.00 609.40L902.00 606.15L902.00 602.90L902.00 599.65L902.00 596.39L902.00 593.14L902.00 589.89L902.00 586.64L902.00 583.39L902.00 580.14L902.00 576.88L902.00 573.63L902.00 570.38L902.00 567.13L902.00 563.88L902.00 560.63L902.00 557.37L902.00 554.12L902.00 550.87L902.00 547.62L902.00 544.37L902.00 541.12L902.00 537.86L902.00 534.61L902.00 531.36L902.00 528.11L902.00 524.86L902.00 521.61L902.00 518.35L902.00 515.10L902.00 511.85L902.00 508.60L902.00 505.35L902.00 502.10L902.00 498.84L902.00 495.59L902.00 492.34L902.00 489.09L902.00 485.84L902.00 482.59L902.00 479.33L902.00 476.08L902.00 472.83L902.00 469.58L902.00 466.33L902.00 463.07L902.00 459.82L902.00 456.57L902.00 453.32L902.00 450.07L902.00 446.82L902.00 443.56L902.00 440.31L902.00 437.06L902.00 433.81L902.00 430.56L902.00 427.31L902.00 424.05L902.00 420.80L902.00 417.55L902.00 414.30L902.00 411.05L902.00 407.80L902.00 404.54L902.00 401.29L902.00 398.04L902.00 394.79L902.00 391.54L902.00 388.29L902.00 385.03L902.00 381.78L902.00 378.53L902.00 375.28L902.00 372.03L902.00 368.78L902.00 365.52L902.00 362.27L902.00 359.02L902.00 355.77L902.00 352.52L902.00 349.27L902.00 346.01L902.00 342.76L902.00 339.51L902.00 336.26L902.00 333.01L902.00 329.76L902.00 326.50L902.00 323.25L902.00 320.00L902.00 316.75L902.00 313.50L902.00 310.24L902.00 306.99L902.00 303.74L902.00 300.49L902.00 297.24L902.00 293.99L902.00 290.73L902.00 287.48L902.00 284.23L902.00 280.98L902.00 277.73L902.00 274.48L902.00 271.22L902.00 267.97L902.00 264.72L902.00 261.47L902.00 258.22L902.00 254.97L902.00 251.71L902.00 248.46L902.00 245.21L902.00 241.96L902.00 238.71L902.00 235.46L902.00 232.20L902.00 228.95L902.00 225.70L902.00 222.45L902.00 219.20L902.00 215.95L902.00 212.69L902.00 209.44L902.00 206.19L902.00 202.94L902.00 199.69L902.00 196.44L902.00 193.18L902.00 189.93L902.00 186.68L902.00 183.43L902.00 180.18L902.00 176.93L902.00 173.67L902.00 170.42L902.00 167.17L902.00 163.92L902.00 160.67L902.00 157.41L902.00 154.16L902.00 150.91L902.00 147.66L902.00 144.41L902.00 141.16L902.00 137.90L902.00 134.65L902.00 131.40L902.00 128.15L902.00 124.90L902.00 121.65L902.00 118.39L902.00 115.14L902.00 111.89L902.00 108.64L902.00 105.39L902.00 102.14L902.00 98.88L902.00 95.63L902.00 92.38L902.00 89.13L902.00 85.88L902.00 82.63L902.00 79.37L902.00 76.12L902.00 72.87L902.00 69.62L902.00 66.37L902.00 63.12L902.00 59.86L902.00 56.61L902.00 53.36L902.00 50.11L902.00 46.86L902.00 43.61L902.00 40.35L902.00 37.10L902.00 33.85L902.00 30.60L902.00 27.35"/><path stroke-dashoffset="1.0" d="M902.00 612.65L901.15 609.40L900.30 606.15L899.45 602.90L898.60 599.65L897.75 596.39L896.90 593.14L896.06 589.89L895.21 586.64L894.37 583.39L893.53 580.14L892.69 576.88L891.86 573.63L891.03 570.38L890.20 567.13L889.38 563.88L888.56 560.63L887.74 557.37L886.93 554.12L886.12 550.87L885.32 547.62L884.52 544.37L883.73 541.12L882.94 537.86L882.16 534.61L881.39 531.36L880.62 528.11L879.86 524.86L879.10 521.61L878.35 518.35L877.61 515.10L876.88 511.85L876.15 508.60L875.43 505.35L874.73 502.10L874.02 498.84L873.33 495.59L872.65 492.34L871.97 489.09L871.30 485.84L870.65 482.59L870.00 479.33L869.36 476.08L868.74 472.83L868.12 469.58L867.51 466.33L866.91 463.07L866.33 459.82L865.75 456.57L865.19 453.32L864.64 450.07L864.09 446.82L863.56 443.56L863.05 440.31L862.54 437.06L862.05 433.81L861.56 430.56L861.09 427.31L860.64 424.05L860.19 420.80L859.76 417.55L859.34 414.30L858.93 411.05L858.54 407.80L858.16 404.54L857.79 401.29L857.44 398.04L857.10 394.79L856.78 391.54L856.46 388.29L856.17 385.03L855.88 381.78L855.61 378.53L855.36 375.28L855.11 372.03L854.89 368.78L854.67 365.52L854.47 362.27L854.29 359.02L854.12 355.77L853.97 352.52L853.83 349.27L853.70 346.01L853.59 342.76L853.49 339.51L853.41 336.26L853.34 333.01L853.29 329.76L853.25 326.50L853.23 323.25L853.22 320.00L853.23 316.75L853.25 313.50L853.29 310.24L853.34 306.99L853.41 303.74L853.49 300.49L853.59 297.24L853.70 293.99L853.83 290.73L853.97 287.48L854.12 284.23L854.29 280.98L854.47 277.73L854.67 274.48L854.89 271.22L855.11 267.97L855.36 264.72L855.61 261.47L855.88 258.22L856.17 254.97L856.46 251.71L856.78 248.46L857.10 245.21L857.44 241.96L857.79 238.71L858.16 235.46L858.54 232.20L858.93 228.95L859.34 225.70L859.76 222.45L860.19 219.20L860.64 215.95L861.09 212.69L861.56 209.44L862.05 206.19L862.54 202.94L863.05 199.69L863.56 196.44L864.09 193.18L864.64 189.93L865.19 186.68L865.75 183.43L866.33 180.18L866.91 176.93L867.51 173.67L868.12 170.42L868.74 167.17L869.36 163.92L870.00 160.67L870.65 157.41L871.30 154.16L871.97 150.91L872.65 147.66L873.33 144.41L874.02 141.16L874.73 137.90L875.43 134.65L876.15 131.40L876.88 128.15L877.61 124.90L878.35 121.65L879.10 118.39L879.86 115.14L880.62 111.89L881.39 108.64L882.16 105.39L882.94 102.14L883.73 98.88L884.52 95.63L885.32 92.38L886.12 89.13L886.93 85.88L887.74 82.63L888.56 79.37L889.38 76.12L890.20 72.87L891.03 69.62L891.86 66.37L892.69 63.12L893.53 59.86L894.37 56.61L895.21 53.36L896.06 50.11L896.90 46.86L897.75 43.61L898.60 40.35L899.45 37.10L900.30 33.85L901.15 30.60L902.00 27.35"/><path stroke-dashoffset="1.0" d="M902.00 612.65L900.30 609.40L898.60 606.15L896.89 602.90L895.20 599.65L893.50 596.39L891.80 593.14L890.11 589.89L888.42 586.64L886.74 583.39L885.06 580.14L883.39 576.88L881.72 573.63L880.06 570.38L878.40 567.13L876.75 563.88L875.11 560.63L873.48 557.37L871.86 554.12L870.24 550.87L868.64 547.62L867.04 544.37L865.46 541.12L863.88 537.86L862.32 534.61L860.77 531.36L859.24 528.11L857.71 524.86L856.20 521.61L854.71 518.35L853.22 515.10L851.76 511.85L850.31 508.60L848.87 505.35L847.45 502.10L846.05 498.84L844.66 495.59L843.29 492.34L841.94 489.09L840.61 485.84L839.30 482.59L838.00 479.33L836.73 476.08L835.47 472.83L834.24 469.58L833.02 466.33L831.83 463.07L830.66 459.82L829.51 456.57L828.38 453.32L827.27 450.07L826.19 446.82L825.13 443.56L824.09 440.31L823.08 437.06L822.09 433.81L821.13 430.56L820.19 427.31L819.27 424.05L818.38 420.80L817.52 417.55L816.68 414.30L815.87 411.05L815.08 407.80L814.32 404.54L813.59 401.29L812.88 398.04L812.20 394.79L811.55 391.54L810.93 388.29L810.33 385.03L809.76 381.78L809.22 378.53L808.71 375.28L808.23 372.03L807.77 368.78L807.35 365.52L806.95 362.27L806.58 359.02L806.24 355.77L805.93 352.52L805.65 349.27L805.40 346.01L805.18 342.76L804.98 339.51L804.82 336.26L804.69 333.01L804.58 329.76L804.51 326.50L804.46 323.25L804.45 320.00L804.46 316.75L804.51 313.50L804.58 310.24L804.69 306.99L804.82 303.74L804.98 300.49L805.18 297.24L805.40 293.99L805.65 290.73L805.93 287.48L806.24 284.23L806.58 280.98L806.95 277.73L807.35 274.48L807.77 271.22L808.23 267.97L808.71 264.72L809.22 261.47L809.76 258.22L810.33 254.97L810.93 251.71L811.55 248.46L812.20 245.21L812.88 241.96L813.59 238.71L814.32 235.46L815.08 232.20L815.87 228.95L816.68 225.70L817.52 222.45L818.38 219.20L819.27 215.95L820.19 212.69L821.13 209.44L822.09 206.19L823.08 202.94L824.09 199.69L825.13 196.44L826.19 193.18L827.27 189.93L828.38 186.68L829.51 183.43L830.66 180.18L831.83 176.93L833.02 173.67L834.24 170.42L835.47 167.17L836.73 163.92L838.00 160.67L839.30 157.41L840.61 154.16L841.94 150.91L843.29 147.66L844.66 144.41L846.05 141.16L847.45 137.90L848.87 134.65L850.31 131.40L851.76 128.15L853.22 124.90L854.71 121.65L856.20 118.39L857.71 115.14L859.24 111.89L860.77 108.64L862.32 105.39L863.88 102.14L865.46 98.88L867.04 95.63L868.64 92.38L870.24 89.13L871.86 85.88L873.48 82.63L875.11 79.37L876.75 76.12L878.40 72.87L880.06 69.62L881.72 66.37L883.39 63.12L885.06 59.86L886.74 56.61L888.42 53.36L890.11 50.11L891.80 46.86L893.50 43.61L895.20 40.35L896.89 37.10L898.60 33.85L900.30 30.60L902.00 27.35"/><path stroke-dashoffset="1.0" d="M902.00 612.65L899.45 609.40L896.89 606.15L894.34 602.90L891.79 599.65L889.25 596.39L886.70 593.14L884.17 589.89L881.64 586.64L879.11 583.39L876.59 580.14L874.08 576.88L871.58 573.63L869.08 570.38L866.60 567.13L864.13 563.88L861.67 560.63L859.22 557.37L856.78 554.12L854.36 550.87L851.95 547.62L849.56 544.37L847.19 541.12L844.83 537.86L842.48 534.61L840.16 531.36L837.85 528.11L835.57 524.86L833.30 521.61L831.06 518.35L828.84 515.10L826.64 511.85L824.46 508.60L822.30 505.35L820.18 502.10L818.07 498.84L815.99 495.59L813.94 492.34L811.91 489.09L809.91 485.84L807.94 482.59L806.00 479.33L804.09 476.08L802.21 472.83L800.35 469.58L798.53 466.33L796.74 463.07L794.98 459.82L793.26 456.57L791.57 453.32L789.91 450.07L788.28 446.82L786.69 443.56L785.14 440.31L783.62 437.06L782.14 433.81L780.69 430.56L779.28 427.31L777.91 424.05L776.57 420.80L775.28 417.55L774.02 414.30L772.80 411.05L771.62 407.80L770.48 404.54L769.38 401.29L768.32 398.04L767.31 394.79L766.33 391.54L765.39 388.29L764.50 385.03L763.65 381.78L762.84 378.53L762.07 375.28L761.34 372.03L760.66 368.78L760.02 365.52L759.42 362.27L758.87 359.02L758.36 355.77L757.90 352.52L757.48 349.27L757.10 346.01L756.76 342.76L756.48 339.51L756.23 336.26L756.03 333.01L755.87 329.76L755.76 326.50L755.70 323.25L755.67 320.00L755.70 316.75L755.76 313.50L755.87 310.24L756.03 306.99L756.23 303.74L756.48 300.49L756.76 297.24L757.10 293.99L757.48 290.73L757.90 287.48L758.36 284.23L758.87 280.98L759.42 277.73L760.02 274.48L760.66 271.22L761.34 267.97L762.07 264.72L762.84 261.47L763.65 258.22L764.50 254.97L765.39 251.71L766.33 248.46L767.31 245.21L768.32 241.96L769.38 238.71L770.48 235.46L771.62 232.20L772.80 228.95L774.02 225.70L775.28 222.45L776.57 219.20L777.91 215.95L779.28 212.69L780.69 209.44L782.14 206.19L783.62 202.94L785.14 199.69L786.69 196.44L788.28 193.18L789.91 189.93L791.57 186.68L793.26 183.43L794.98 180.18L796.74 176.93L798.53 173.67L800.35 170.42L802.21 167.17L804.09 163.92L806.00 160.67L807.94 157.41L809.91 154.16L811.91 150.91L813.94 147.66L815.99 144.41L818.07 141.16L820.18 137.90L822.30 134.65L824.46 131.40L826.64 128.15L828.84 124.90L831.06 121.65L833.30 118.39L835.57 115.14L837.85 111.89L840.16 108.64L842.48 105.39L844.83 102.14L847.19 98.88L849.56 95.63L851.95 92.38L854.36 89.13L856.78 85.88L859.22 82.63L861.67 79.37L864.13 76.12L866.60 72.87L869.08 69.62L871.58 66.37L874.08 63.12L876.59 59.86L879.11 56.61L881.64 53.36L884.17 50.11L886.70 46.86L889.25 43.61L891.79 40.35L894.34 37.10L896.89 33.85L899.45 30.60L902.00 27.35"/><path stroke-dashoffset="1.0" d="M902.00 612.65L898.60 609.40L895.19 606.15L891.79 602.90L888.39 599.65L885.00 596.39L881.61 593.14L878.22 589.89L874.85 586.64L871.48 583.39L868.12 580.14L864.77 576.88L861.44 573.63L858.11 570.38L854.80 567.13L851.50 563.88L848.22 560.63L844.96 557.37L841.71 554.12L838.48 550.87L835.27 547.62L832.08 544.37L828.91 541.12L825.77 537.86L822.64 534.61L819.55 531.36L816.47 528.11L813.43 524.86L810.41 521.61L807.41 518.35L804.45 515.10L801.52 511.85L798.61 508.60L795.74 505.35L792.90 502.10L790.09 498.84L787.32 495.59L784.58 492.34L781.88 489.09L779.22 485.84L776.59 482.59L774.00 479.33L771.45 476.08L768.94 472.83L766.47 469.58L764.04 466.33L761.66 463.07L759.31 459.82L757.01 456.57L754.75 453.32L752.54 450.07L750.38 446.82L748.26 443.56L746.18 440.31L744.16 437.06L742.18 433.81L740.25 430.56L738.37 427.31L736.54 424.05L734.76 420.80L733.04 417.55L731.36 414.30L729.74 411.05L728.16 407.80L726.64 404.54L725.18 401.29L723.77 398.04L722.41 394.79L721.10 391.54L719.86 388.29L718.66 385.03L717.53 381.78L716.45 378.53L715.42 375.28L714.46 372.03L713.55 368.78L712.69 365.52L711.90 362.27L711.16 359.02L710.48 355.77L709.86 352.52L709.30 349.27L708.80 346.01L708.35 342.76L707.97 339.51L707.64 336.26L707.37 333.01L707.17 329.76L707.02 326.50L706.93 323.25L706.90 320.00L706.93 316.75L707.02 313.50L707.17 310.24L707.37 306.99L707.64 303.74L707.97 300.49L708.35 297.24L708.80 293.99L709.30 290.73L709.86 287.48L710.48 284.23L711.16 280.98L711.90 277.73L712.69 274.48L713.55 271.22L714.46 267.97L715.42 264.72L716.45 261.47L717.53 258.22L718.66 254.97L719.86 251.71L721.10 248.46L722.41 245.21L723.77 241.96L725.18 238.71L726.64 235.46L728.16 232.20L729.74 228.95L731.36 225.70L733.04 222.45L734.76 219.20L736.54 215.95L738.37 212.69L740.25 209.44L742.18 206.19L744.16 202.94L746.18 199.69L748.26 196.44L750.38 193.18L752.54 189.93L754.75 186.68L757.01 183.43L759.31 180.18L761.66 176.93L764.04 173.67L766.47 170.42L768.94 167.17L771.45 163.92L774.00 160.67L776.59 157.41L779.22 154.16L781.88 150.91L784.58 147.66L787.32 144.41L790.09 141.16L792.90 137.90L795.74 134.65L798.61 131.40L801.52 128.15L804.45 124.90L807.41 121.65L810.41 118.39L813.43 115.14L816.47 111.89L819.55 108.64L822.64 105.39L825.77 102.14L828.91 98.88L832.08 95.63L835.27 92.38L838.48 89.13L841.71 85.88L844.96 82.63L848.22 79.37L851.50 76.12L854.80 72.87L858.11 69.62L861.44 66.37L864.77 63.12L868.12 59.86L871.48 56.61L874.85 53.36L878.22 50.11L881.61 46.86L885.00 43.61L888.39 40.35L891.79 37.10L895.19 33.85L898.60 30.60L902.00 27.35"/><path stroke-dashoffset="1.0" d="M902.00 612.65L897.74 609.40L893.49 606.15L889.24 602.90L884.99 599.65L880.74 596.39L876.51 593.14L872.28 589.89L868.06 586.64L863.85 583.39L859.65 580.14L855.47 576.88L851.30 573.63L847.14 570.38L843.00 567.13L838.88 563.88L834.78 560.63L830.70 557.37L826.64 554.12L822.60 550.87L818.59 547.62L814.60 544.37L810.64 541.12L806.71 537.86L802.81 534.61L798.93 531.36L795.09 528.11L791.28 524.86L787.51 521.61L783.77 518.35L780.06 515.10L776.39 511.85L772.76 508.60L769.17 505.35L765.63 502.10L762.12 498.84L758.65 495.59L755.23 492.34L751.85 489.09L748.52 485.84L745.24 482.59L742.00 479.33L738.81 476.08L735.68 472.83L732.59 469.58L729.55 466.33L726.57 463.07L723.64 459.82L720.76 456.57L717.94 453.32L715.18 450.07L712.47 446.82L709.82 443.56L707.23 440.31L704.70 437.06L702.23 433.81L699.82 430.56L697.47 427.31L695.18 424.05L692.96 420.80L690.80 417.55L688.70 414.30L686.67 411.05L684.70 407.80L682.80 404.54L680.97 401.29L679.21 398.04L677.51 394.79L675.88 391.54L674.32 388.29L672.83 385.03L671.41 381.78L670.06 378.53L668.78 375.28L667.57 372.03L666.43 368.78L665.37 365.52L664.37 362.27L663.45 359.02L662.60 355.77L661.83 352.52L661.13 349.27L660.50 346.01L659.94 342.76L659.46 339.51L659.05 336.26L658.72 333.01L658.46 329.76L658.27 326.50L658.16 323.25L658.12 320.00L658.16 316.75L658.27 313.50L658.46 310.24L658.72 306.99L659.05 303.74L659.46 300.49L659.94 297.24L660.50 293.99L661.13 290.73L661.83 287.48L662.60 284.23L663.45 280.98L664.37 277.73L665.37 274.48L666.43 271.22L667.57 267.97L668.78 264.72L670.06 261.47L671.41 258.22L672.83 254.97L674.32 251.71L675.88 248.46L677.51 245.21L679.21 241.96L680.97 238.71L682.80 235.46L684.70 232.20L686.67 228.95L688.70 225.70L690.80 222.45L692.96 219.20L695.18 215.95L697.47 212.69L699.82 209.44L702.23 206.19L704.70 202.94L707.23 199.69L709.82 196.44L712.47 193.18L715.18 189.93L717.94 186.68L720.76 183.43L723.64 180.18L726.57 176.93L729.55 173.67L732.59 170.42L735.68 167.17L738.81 163.92L742.00 160.67L745.24 157.41L748.52 154.16L751.85 150.91L755.23 147.66L758.65 144.41L762.12 141.16L765.63 137.90L769.17 134.65L772.76 131.40L776.39 128.15L780.06 124.90L783.77 121.65L787.51 118.39L791.28 115.14L795.09 111.89L798.93 108.64L802.81 105.39L806.71 102.14L810.64 98.88L814.60 95.63L818.59 92.38L822.60 89.13L826.64 85.88L830.70 82.63L834.78 79.37L838.88 76.12L843.00 72.87L847.14 69.62L851.30 66.37L855.47 63.12L859.65 59.86L863.85 56.61L868.06 53.36L872.28 50.11L876.51 46.86L880.74 43.61L884.99 40.35L889.24 37.10L893.49 33.85L897.74 30.60L902.00 27.35"/><path stroke-dashoffset="1.0" d="M902.00 612.65L896.89 609.40L891.79 606.15L886.68 602.90L881.59 599.65L876.49 596.39L871.41 593.14L866.33 589.89L861.27 586.64L856.22 583.39L851.18 580.14L846.16 576.88L841.15 573.63L836.17 570.38L831.20 567.13L826.26 563.88L821.33 560.63L816.44 557.37L811.57 554.12L806.72 550.87L801.91 547.62L797.12 544.37L792.37 541.12L787.65 537.86L782.97 534.61L778.32 531.36L773.71 528.11L769.14 524.86L764.61 521.61L760.12 518.35L755.67 515.10L751.27 511.85L746.92 508.60L742.61 505.35L738.35 502.10L734.14 498.84L729.98 495.59L725.88 492.34L721.82 489.09L717.83 485.84L713.89 482.59L710.00 479.33L706.18 476.08L702.41 472.83L698.71 469.58L695.06 466.33L691.48 463.07L687.97 459.82L684.52 456.57L681.13 453.32L677.81 450.07L674.57 446.82L671.39 443.56L668.28 440.31L665.24 437.06L662.27 433.81L659.38 430.56L656.56 427.31L653.82 424.05L651.15 420.80L648.56 417.55L646.04 414.30L643.60 411.05L641.24 407.80L638.97 404.54L636.77 401.29L634.65 398.04L632.61 394.79L630.66 391.54L628.78 388.29L627.00 385.03L625.29 381.78L623.67 378.53L622.13 375.28L620.68 372.03L619.32 368.78L618.04 365.52L616.85 362.27L615.74 359.02L614.72 355.77L613.79 352.52L612.95 349.27L612.20 346.01L611.53 342.76L610.95 339.51L610.46 336.26L610.06 333.01L609.75 329.76L609.53 326.50L609.39 323.25L609.35 320.00L609.39 316.75L609.53 313.50L609.75 310.24L610.06 306.99L610.46 303.74L610.95 300.49L611.53 297.24L612.20 293.99L612.95 290.73L613.79 287.48L614.72 284.23L615.74 280.98L616.85 277.73L618.04 274.48L619.32 271.22L620.68 267.97L622.13 264.72L623.67 261.47L625.29 258.22L627.00 254.97L628.78 251.71L630.66 248.46L632.61 245.21L634.65 241.96L636.77 238.71L638.97 235.46L641.24 232.20L643.60 228.95L646.04 225.70L648.56 222.45L651.15 219.20L653.82 215.95L656.56 212.69L659.38 209.44L662.27 206.19L665.24 202.94L668.28 199.69L671.39 196.44L674.57 193.18L677.81 189.93L681.13 186.68L684.52 183.43L687.97 180.18L691.48 176.93L695.06 173.67L698.71 170.42L702.41 167.17L706.18 163.92L710.00 160.67L713.89 157.41L717.83 154.16L721.82 150.91L725.88 147.66L729.98 144.41L734.14 141.16L738.35 137.90L742.61 134.65L746.92 131.40L751.27 128.15L755.67 124.90L760.12 121.65L764.61 118.39L769.14 115.14L773.71 111.89L778.32 108.64L782.97 105.39L787.65 102.14L792.37 98.88L797.12 95.63L801.91 92.38L806.72 89.13L811.57 85.88L816.44 82.63L821.33 79.37L826.26 76.12L831.20 72.87L836.17 69.62L841.15 66.37L846.16 63.12L851.18 59.86L856.22 56.61L861.27 53.36L866.33 50.11L871.41 46.86L876.49 43.61L881.59 40.35L886.68 37.10L891.79 33.85L896.89 30.60L902.00 27.35"/><path stroke-dashoffset="1.0" d="M902.00 612.65L896.04 609.40L890.08 606.15L884.13 602.90L878.18 599.65L872.24 596.39L866.31 593.14L860.39 589.89L854.48 586.64L848.59 583.39L842.71 580.14L836.85 576.88L831.01 573.63L825.20 570.38L819.40 567.13L813.63 563.88L807.89 560.63L802.18 557.37L796.49 554.12L790.84 550.87L785.22 547.62L779.64 544.37L774.10 541.12L768.59 537.86L763.13 534.61L757.71 531.36L752.33 528.11L746.99 524.86L741.71 521.61L736.47 518.35L731.29 515.10L726.15 511.85L721.07 508.60L716.04 505.35L711.08 502.10L706.16 498.84L701.31 495.59L696.52 492.34L691.80 489.09L687.13 485.84L682.53 482.59L678.00 479.33L673.54 476.08L669.15 472.83L664.82 469.58L660.57 466.33L656.40 463.07L652.30 459.82L648.27 456.57L644.32 453.32L640.45 450.07L636.66 446.82L632.95 443.56L629.32 440.31L625.78 437.06L622.32 433.81L618.94 430.56L615.65 427.31L612.45 424.05L609.34 420.80L606.31 417.55L603.38 414.30L600.54 411.05L597.78 407.80L595.13 404.54L592.56 401.29L590.09 398.04L587.71 394.79L585.43 391.54L583.25 388.29L581.16 385.03L579.17 381.78L577.28 378.53L575.49 375.28L573.80 372.03L572.21 368.78L570.71 365.52L569.32 362.27L568.03 359.02L566.84 355.77L565.76 352.52L564.78 349.27L563.89 346.01L563.12 342.76L562.44 339.51L561.87 336.26L561.40 333.01L561.04 329.76L560.78 326.50L560.62 323.25L560.57 320.00L560.62 316.75L560.78 313.50L561.04 310.24L561.40 306.99L561.87 303.74L562.44 300.49L563.12 297.24L563.89 293.99L564.78 290.73L565.76 287.48L566.84 284.23L568.03 280.98L569.32 277.73L570.71 274.48L572.21 271.22L573.80 267.97L575.49 264.72L577.28 261.47L579.17 258.22L581.16 254.97L583.25 251.71L585.43 248.46L587.71 245.21L590.09 241.96L592.56 238.71L595.13 235.46L597.78 232.20L600.54 228.95L603.38 225.70L606.31 222.45L609.34 219.20L612.45 215.95L615.65 212.69L618.94 209.44L622.32 206.19L625.78 202.94L629.32 199.69L632.95 196.44L636.66 193.18L640.45 189.93L644.32 186.68L648.27 183.43L652.30 180.18L656.40 176.93L660.57 173.67L664.82 170.42L669.15 167.17L673.54 163.92L678.00 160.67L682.53 157.41L687.13 154.16L691.80 150.91L696.52 147.66L701.31 144.41L706.16 141.16L711.08 137.90L716.04 134.65L721.07 131.40L726.15 128.15L731.29 124.90L736.47 121.65L741.71 118.39L746.99 115.14L752.33 111.89L757.71 108.64L763.13 105.39L768.59 102.14L774.10 98.88L779.64 95.63L785.22 92.38L790.84 89.13L796.49 85.88L802.18 82.63L807.89 79.37L813.63 76.12L819.40 72.87L825.20 69.62L831.01 66.37L836.85 63.12L842.71 59.86L848.59 56.61L854.48 53.36L860.39 50.11L866.31 46.86L872.24 43.61L878.18 40.35L884.13 37.10L890.08 33.85L896.04 30.60L902.00 27.35"/><path stroke-dashoffset="1.0" d="M902.00 612.65L895.19 609.40L888.38 606.15L881.58 602.90L874.78 599.65L867.99 596.39L861.21 593.14L854.45 589.89L847.69 586.64L840.96 583.39L834.24 580.14L827.55 576.88L820.87 573.63L814.22 570.38L807.60 567.13L801.01 563.88L794.45 560.63L787.92 557.37L781.42 554.12L774.96 550.87L768.54 547.62L762.16 544.37L755.83 541.12L749.54 537.86L743.29 534.61L737.09 531.36L730.95 528.11L724.85 524.86L718.81 521.61L712.83 518.35L706.90 515.10L701.03 511.85L695.22 508.60L689.48 505.35L683.80 502.10L678.19 498.84L672.64 495.59L667.17 492.34L661.77 489.09L656.44 485.84L651.18 482.59L646.00 479.33L640.90 476.08L635.88 472.83L630.94 469.58L626.08 466.33L621.31 463.07L616.62 459.82L612.02 456.57L607.51 453.32L603.09 450.07L598.75 446.82L594.52 443.56L590.37 440.31L586.32 437.06L582.36 433.81L578.51 430.56L574.75 427.31L571.09 424.05L567.53 420.80L564.07 417.55L560.72 414.30L557.47 411.05L554.33 407.80L551.29 404.54L548.36 401.29L545.53 398.04L542.82 394.79L540.21 391.54L537.71 388.29L535.33 385.03L533.05 381.78L530.89 378.53L528.85 375.28L526.91 372.03L525.09 368.78L523.39 365.52L521.80 362.27L520.32 359.02L518.97 355.77L517.72 352.52L516.60 349.27L515.59 346.01L514.70 342.76L513.93 339.51L513.28 336.26L512.75 333.01L512.33 329.76L512.03 326.50L511.86 323.25L511.80 320.00L511.86 316.75L512.03 313.50L512.33 310.24L512.75 306.99L513.28 303.74L513.93 300.49L514.70 297.24L515.59 293.99L516.60 290.73L517.72 287.48L518.97 284.23L520.32 280.98L521.80 277.73L523.39 274.48L525.09 271.22L526.91 267.97L528.85 264.72L530.89 261.47L533.05 258.22L535.33 254.97L537.71 251.71L540.21 248.46L542.82 245.21L545.53 241.96L548.36 238.71L551.29 235.46L554.33 232.20L557.47 228.95L560.72 225.70L564.07 222.45L567.53 219.20L571.09 215.95L574.75 212.69L578.51 209.44L582.36 206.19L586.32 202.94L590.37 199.69L594.52 196.44L598.75 193.18L603.09 189.93L607.51 186.68L612.02 183.43L616.62 180.18L621.31 176.93L626.08 173.67L630.94 170.42L635.88 167.17L640.90 163.92L646.00 160.67L651.18 157.41L656.44 154.16L661.77 150.91L667.17 147.66L672.64 144.41L678.19 141.16L683.80 137.90L689.48 134.65L695.22 131.40L701.03 128.15L706.90 124.90L712.83 121.65L718.81 118.39L724.85 115.14L730.95 111.89L737.09 108.64L743.29 105.39L749.54 102.14L755.83 98.88L762.16 95.63L768.54 92.38L774.96 89.13L781.42 85.88L787.92 82.63L794.45 79.37L801.01 76.12L807.60 72.87L814.22 69.62L820.87 66.37L827.55 63.12L834.24 59.86L840.96 56.61L847.69 53.36L854.45 50.11L861.21 46.86L867.99 43.61L874.78 40.35L881.58 37.10L888.38 33.85L895.19 30.60L902.00 27.35"/><path stroke-dashoffset="1.0" d="M902.00 612.65L894.34 609.40L886.68 606.15L879.03 602.90L871.38 599.65L863.74 596.39L856.11 593.14L848.50 589.89L840.91 586.64L833.33 583.39L825.77 580.14L818.24 576.88L810.73 573.63L803.25 570.38L795.80 567.13L788.38 563.88L781.00 560.63L773.65 557.37L766.35 554.12L759.08 550.87L751.86 547.62L744.68 544.37L737.56 541.12L730.48 537.86L723.45 534.61L716.48 531.36L709.56 528.11L702.71 524.86L695.91 521.61L689.18 518.35L682.51 515.10L675.91 511.85L669.38 508.60L662.91 505.35L656.53 502.10L650.21 498.84L643.97 495.59L637.82 492.34L631.74 489.09L625.74 485.84L619.83 482.59L614.00 479.33L608.27 476.08L602.62 472.83L597.06 469.58L591.59 466.33L586.22 463.07L580.95 459.82L575.77 456.57L570.70 453.32L565.72 450.07L560.85 446.82L556.08 443.56L551.42 440.31L546.86 437.06L542.41 433.81L538.07 430.56L533.84 427.31L529.72 424.05L525.72 420.80L521.83 417.55L518.06 414.30L514.40 411.05L510.87 407.80L507.45 404.54L504.15 401.29L500.97 398.04L497.92 394.79L494.99 391.54L492.18 388.29L489.49 385.03L486.94 381.78L484.51 378.53L482.20 375.28L480.03 372.03L477.98 368.78L476.06 365.52L474.27 362.27L472.61 359.02L471.09 355.77L469.69 352.52L468.43 349.27L467.29 346.01L466.29 342.76L465.43 339.51L464.69 336.26L464.09 333.01L463.62 329.76L463.29 326.50L463.09 323.25L463.02 320.00L463.09 316.75L463.29 313.50L463.62 310.24L464.09 306.99L464.69 303.74L465.43 300.49L466.29 297.24L467.29 293.99L468.43 290.73L469.69 287.48L471.09 284.23L472.61 280.98L474.27 277.73L476.06 274.48L477.98 271.22L480.03 267.97L482.20 264.72L484.51 261.47L486.94 258.22L489.49 254.97L492.18 251.71L494.99 248.46L497.92 245.21L500.97 241.96L504.15 238.71L507.45 235.46L510.87 232.20L514.40 228.95L518.06 225.70L521.83 222.45L525.72 219.20L529.72 215.95L533.84 212.69L538.07 209.44L542.41 206.19L546.86 202.94L551.42 199.69L556.08 196.44L560.85 193.18L565.72 189.93L570.70 186.68L575.77 183.43L580.95 180.18L586.22 176.93L591.59 173.67L597.06 170.42L602.62 167.17L608.27 163.92L614.00 160.67L619.83 157.41L625.74 154.16L631.74 150.91L637.82 147.66L643.97 144.41L650.21 141.16L656.53 137.90L662.91 134.65L669.38 131.40L675.91 128.15L682.51 124.90L689.18 121.65L695.91 118.39L702.71 115.14L709.56 111.89L716.48 108.64L723.45 105.39L730.48 102.14L737.56 98.88L744.68 95.63L751.86 92.38L759.08 89.13L766.35 85.88L773.65 82.63L781.00 79.37L788.38 76.12L795.80 72.87L803.25 69.62L810.73 66.37L818.24 63.12L825.77 59.86L833.33 56.61L840.91 53.36L848.50 50.11L856.11 46.86L863.74 43.61L871.38 40.35L879.03 37.10L886.68 33.85L894.34 30.60L902.00 27.35"/><path stroke-dashoffset="1.0" d="M902.00 612.65L893.49 609.40L884.98 606.15L876.47 602.90L867.98 599.65L859.49 596.39L851.02 593.14L842.56 589.89L834.12 586.64L825.70 583.39L817.30 580.14L808.93 576.88L800.59 573.63L792.28 570.38L784.00 567.13L775.76 563.88L767.56 560.63L759.39 557.37L751.28 554.12L743.20 550.87L735.18 547.62L727.20 544.37L719.28 541.12L711.42 537.86L703.61 534.61L695.87 531.36L688.18 528.11L680.56 524.86L673.01 521.61L665.53 518.35L658.12 515.10L650.79 511.85L643.53 508.60L636.35 505.35L629.25 502.10L622.24 498.84L615.30 495.59L608.46 492.34L601.71 489.09L595.05 485.84L588.48 482.59L582.00 479.33L575.63 476.08L569.35 472.83L563.18 469.58L557.11 466.33L551.14 463.07L545.28 459.82L539.53 456.57L533.89 453.32L528.36 450.07L522.94 446.82L517.64 443.56L512.46 440.31L507.40 437.06L502.45 433.81L497.63 430.56L492.93 427.31L488.36 424.05L483.91 420.80L479.59 417.55L475.40 414.30L471.34 411.05L467.41 407.80L463.61 404.54L459.94 401.29L456.41 398.04L453.02 394.79L449.76 391.54L446.64 388.29L443.66 385.03L440.82 381.78L438.12 378.53L435.56 375.28L433.14 372.03L430.86 368.78L428.73 365.52L426.75 362.27L424.90 359.02L423.21 355.77L421.66 352.52L420.25 349.27L418.99 346.01L417.88 342.76L416.92 339.51L416.10 336.26L415.43 333.01L414.91 329.76L414.54 326.50L414.32 323.25L414.25 320.00L414.32 316.75L414.54 313.50L414.91 310.24L415.43 306.99L416.10 303.74L416.92 300.49L417.88 297.24L418.99 293.99L420.25 290.73L421.66 287.48L423.21 284.23L424.90 280.98L426.75 277.73L428.73 274.48L430.86 271.22L433.14 267.97L435.56 264.72L438.12 261.47L440.82 258.22L443.66 254.97L446.64 251.71L449.76 248.46L453.02 245.21L456.41 241.96L459.94 238.71L463.61 235.46L467.41 232.20L471.34 228.95L475.40 225.70L479.59 222.45L483.91 219.20L488.36 215.95L492.93 212.69L497.63 209.44L502.45 206.19L507.40 202.94L512.46 199.69L517.64 196.44L522.94 193.18L528.36 189.93L533.89 186.68L539.53 183.43L545.28 180.18L551.14 176.93L557.11 173.67L563.18 170.42L569.35 167.17L575.63 163.92L582.00 160.67L588.48 157.41L595.05 154.16L601.71 150.91L608.46 147.66L615.30 144.41L622.24 141.16L629.25 137.90L636.35 134.65L643.53 131.40L650.79 128.15L658.12 124.90L665.53 121.65L673.01 118.39L680.56 115.14L688.18 111.89L695.87 108.64L703.61 105.39L711.42 102.14L719.28 98.88L727.20 95.63L735.18 92.38L743.20 89.13L751.28 85.88L759.39 82.63L767.56 79.37L775.76 76.12L784.00 72.87L792.28 69.62L800.59 66.37L808.93 63.12L817.30 59.86L825.70 56.61L834.12 53.36L842.56 50.11L851.02 46.86L859.49 43.61L867.98 40.35L876.47 37.10L884.98 33.85L893.49 30.60L902.00 27.35"/><path stroke-dashoffset="1.0" d="M902.00 612.65L892.64 609.40L883.28 606.15L873.92 602.90L864.57 599.65L855.24 596.39L845.92 593.14L836.61 589.89L827.33 586.64L818.07 583.39L808.83 580.14L799.63 576.88L790.45 573.63L781.31 570.38L772.20 567.13L763.14 563.88L754.11 560.63L745.13 557.37L736.20 554.12L727.32 550.87L718.50 547.62L709.72 544.37L701.01 541.12L692.36 537.86L683.77 534.61L675.25 531.36L666.80 528.11L658.42 524.86L650.11 521.61L641.88 518.35L633.73 515.10L625.67 511.85L617.68 508.60L609.78 505.35L601.98 502.10L594.26 498.84L586.64 495.59L579.11 492.34L571.68 489.09L564.35 485.84L557.12 482.59L550.00 479.33L542.99 476.08L536.09 472.83L529.29 469.58L522.62 466.33L516.05 463.07L509.61 459.82L503.28 456.57L497.08 453.32L490.99 450.07L485.04 446.82L479.21 443.56L473.51 440.31L467.94 437.06L462.50 433.81L457.20 430.56L452.03 427.31L447.00 424.05L442.10 420.80L437.35 417.55L432.74 414.30L428.27 411.05L423.95 407.80L419.77 404.54L415.74 401.29L411.85 398.04L408.12 394.79L404.54 391.54L401.11 388.29L397.83 385.03L394.70 381.78L391.73 378.53L388.91 375.28L386.25 372.03L383.75 368.78L381.41 365.52L379.22 362.27L377.19 359.02L375.33 355.77L373.62 352.52L372.08 349.27L370.69 346.01L369.47 342.76L368.41 339.51L367.51 336.26L366.78 333.01L366.20 329.76L365.80 326.50L365.55 323.25L365.47 320.00L365.55 316.75L365.80 313.50L366.20 310.24L366.78 306.99L367.51 303.74L368.41 300.49L369.47 297.24L370.69 293.99L372.08 290.73L373.62 287.48L375.33 284.23L377.19 280.98L379.22 277.73L381.41 274.48L383.75 271.22L386.25 267.97L388.91 264.72L391.73 261.47L394.70 258.22L397.83 254.97L401.11 251.71L404.54 248.46L408.12 245.21L411.85 241.96L415.74 238.71L419.77 235.46L423.95 232.20L428.27 228.95L432.74 225.70L437.35 222.45L442.10 219.20L447.00 215.95L452.03 212.69L457.20 209.44L462.50 206.19L467.94 202.94L473.51 199.69L479.21 196.44L485.04 193.18L490.99 189.93L497.08 186.68L503.28 183.43L509.61 180.18L516.05 176.93L522.62 173.67L529.29 170.42L536.09 167.17L542.99 163.92L550.00 160.67L557.12 157.41L564.35 154.16L571.68 150.91L579.11 147.66L586.64 144.41L594.26 141.16L601.98 137.90L609.78 134.65L617.68 131.40L625.67 128.15L633.73 124.90L641.88 121.65L650.11 118.39L658.42 115.14L666.80 111.89L675.25 108.64L683.77 105.39L692.36 102.14L701.01 98.88L709.72 95.63L718.50 92.38L727.32 89.13L736.20 85.88L745.13 82.63L754.11 79.37L763.14 76.12L772.20 72.87L781.31 69.62L790.45 66.37L799.63 63.12L808.83 59.86L818.07 56.61L827.33 53.36L836.61 50.11L845.92 46.86L855.24 43.61L864.57 40.35L873.92 37.10L883.28 33.85L892.64 30.60L902.00 27.35"/><path stroke-dashoffset="1.0" d="M902.00 612.65L891.79 609.40L881.57 606.15L871.37 602.90L861.17 599.65L850.99 596.39L840.82 593.14L830.67 589.89L820.54 586.64L810.44 583.39L800.36 580.14L790.32 576.88L780.31 573.63L770.33 570.38L760.40 567.13L750.51 563.88L740.67 560.63L730.87 557.37L721.13 554.12L711.44 550.87L701.81 547.62L692.25 544.37L682.74 541.12L673.30 537.86L663.93 534.61L654.64 531.36L645.42 528.11L636.28 524.86L627.22 521.61L618.24 518.35L609.35 515.10L600.55 511.85L591.84 508.60L583.22 505.35L574.70 502.10L566.28 498.84L557.97 495.59L549.75 492.34L541.65 489.09L533.65 485.84L525.77 482.59L518.00 479.33L510.35 476.08L502.82 472.83L495.41 469.58L488.13 466.33L480.97 463.07L473.93 459.82L467.03 456.57L460.26 453.32L453.63 450.07L447.13 446.82L440.77 443.56L434.55 440.31L428.48 437.06L422.55 433.81L416.76 430.56L411.12 427.31L405.63 424.05L400.29 420.80L395.11 417.55L390.08 414.30L385.21 411.05L380.49 407.80L375.93 404.54L371.53 401.29L367.30 398.04L363.22 394.79L359.31 391.54L355.57 388.29L351.99 385.03L348.58 381.78L345.34 378.53L342.27 375.28L339.37 372.03L336.64 368.78L334.08 365.52L331.70 362.27L329.48 359.02L327.45 355.77L325.59 352.52L323.90 349.27L322.39 346.01L321.06 342.76L319.90 339.51L318.92 336.26L318.12 333.01L317.50 329.76L317.05 326.50L316.78 323.25L316.69 320.00L316.78 316.75L317.05 313.50L317.50 310.24L318.12 306.99L318.92 303.74L319.90 300.49L321.06 297.24L322.39 293.99L323.90 290.73L325.59 287.48L327.45 284.23L329.48 280.98L331.70 277.73L334.08 274.48L336.64 271.22L339.37 267.97L342.27 264.72L345.34 261.47L348.58 258.22L351.99 254.97L355.57 251.71L359.31 248.46L363.22 245.21L367.30 241.96L371.53 238.71L375.93 235.46L380.49 232.20L385.21 228.95L390.08 225.70L395.11 222.45L400.29 219.20L405.63 215.95L411.12 212.69L416.76 209.44L422.55 206.19L428.48 202.94L434.55 199.69L440.77 196.44L447.13 193.18L453.63 189.93L460.26 186.68L467.03 183.43L473.93 180.18L480.97 176.93L488.13 173.67L495.41 170.42L502.82 167.17L510.35 163.92L518.00 160.67L525.77 157.41L533.65 154.16L541.65 150.91L549.75 147.66L557.97 144.41L566.28 141.16L574.70 137.90L583.22 134.65L591.84 131.40L600.55 128.15L609.35 124.90L618.24 121.65L627.22 118.39L636.28 115.14L645.42 111.89L654.64 108.64L663.93 105.39L673.30 102.14L682.74 98.88L692.25 95.63L701.81 92.38L711.44 89.13L721.13 85.88L730.87 82.63L740.67 79.37L750.51 76.12L760.40 72.87L770.33 69.62L780.31 66.37L790.32 63.12L800.36 59.86L810.44 56.61L820.54 53.36L830.67 50.11L840.82 46.86L850.99 43.61L861.17 40.35L871.37 37.10L881.57 33.85L891.79 30.60L902.00 27.35"/></g><text x="1471.55" y="330.00" font-size="11.0" fill="#808080" textLength="26.09" lengthAdjust="spacingAndGlyphs">+180</text><circle cx="1501.31" cy="323.40" r="1.0" fill="none" stroke="#808080" stroke-width="0.7" opacity="0.8"/><text x="1374.00" y="330.00" font-size="11.0" fill="#808080" textLength="26.09" lengthAdjust="spacingAndGlyphs">+210</text><circle cx="1403.76" cy="323.40" r="1.0" fill="none" stroke="#808080" stroke-width="0.7" opacity="0.8"/><text x="1276.45" y="330.00" font-size="11.0" fill="#808080" textLength="26.09" lengthAdjust="spacingAndGlyphs">+240</text><circle cx="1306.21" cy="323.40" r="1.0" fill="none" stroke="#808080" stroke-width="0.7" opacity="0.8"/><text x="1178.90" y="330.00" font-size="11.0" fill="#808080" textLength="26.09" lengthAdjust="spacingAndGlyphs">+270</text><circle cx="1208.66" cy="323.40" r="1.0" fill="none" stroke="#808080" stroke-width="0.7" opacity="0.8"/><text x="1081.35" y="330.00" font-size="11.0" fill="#808080" textLength="26.09" lengthAdjust="spacingAndGlyphs">+300</text><circle cx="1111.11" cy="323.40" r="1.0" fill="none" stroke="#808080" stroke-width="0.7" opacity="0.8"/><text x="983.80" y="330.00" font-size="11.0" fill="#808080" textLength="26.09" lengthAdjust="spacingAndGlyphs">+330</text><circle cx="1013.55" cy="323.40" r="1.0" fill="none" stroke="#808080" stroke-width="0.7" opacity="0.8"/><text x="892.43" y="330.00" font-size="11.0" fill="#808080" textLength="13.72" lengthAdjust="spacingAndGlyphs">+0</text><circle cx="909.80" cy="323.40" r="1.0" fill="none" stroke="#808080" stroke-width="0.7" opacity="0.8"/><text x="791.78" y="330.00" font-size="11.0" fill="#808080" textLength="19.93" lengthAdjust="spacingAndGlyphs">+30</text><circle cx="815.36" cy="323.40" r="1.0" fill="none" stroke="#808080" stroke-width="0.7" opacity="0.8"/><text x="694.23" y="330.00" font-size="11.0" fill="#808080" textLength="19.93" lengthAdjust="spacingAndGlyphs">+60</text><circle cx="717.81" cy="323.40" r="1.0" fill="none" stroke="#808080" stroke-width="0.7" opacity="0.8"/><text x="596.68" y="330.00" font-size="11.0" fill="#808080" textLength="19.93" lengthAdjust="spacingAndGlyphs">+90</text><circle cx="620.25" cy="323.40" r="1.0" fill="none" stroke="#808080" stroke-width="0.7" opacity="0.8"/><text x="496.04" y="330.00" font-size="11.0" fill="#808080" textLength="26.09" lengthAdjust="spacingAndGlyphs">+120</text><circle cx="525.80" cy="323.40" r="1.0" fill="none" stroke="#808080" stroke-width="0.7" opacity="0.8"/><text x="398.49" y="330.00" font-size="11.0" fill="#808080" textLength="26.09" lengthAdjust="spacingAndGlyphs">+150</text><circle cx="428.25" cy="323.40" r="1.0" fill="none" stroke="#808080" stroke-width="0.7" opacity="0.8"/><text x="300.94" y="330.00" font-size="11.0" fill="#808080" textLength="26.09" lengthAdjust="spacingAndGlyphs">+180</text><circle cx="330.70" cy="323.40" r="1.0" fill="none" stroke="#808080" stroke-width="0.7" opacity="0.8"/><text x="889.33" y="220.25" font-size="11.0" fill="#808080" textLength="19.93" lengthAdjust="spacingAndGlyphs">+30</text><circle cx="912.91" cy="213.65" r="1.0" fill="none" stroke="#808080" stroke-width="0.7" opacity="0.8"/><text x="889.33" y="122.70" font-size="11.0" fill="#808080" textLength="19.93" lengthAdjust="spacingAndGlyphs">+60</text><circle cx="912.91" cy="116.10" r="1.0" fill="none" stroke="#808080" stroke-width="0.7" opacity="0.8"/><text x="889.33" y="25.15" font-size="11.0" fill="#808080" textLength="19.93" lengthAdjust="spacingAndGlyphs">+90</text><circle cx="912.91" cy="18.55" r="1.0" fill="none" stroke="#808080" stroke-width="0.7" opacity="0.8"/><text x="889.30" y="427.65" font-size="11.0" fill="#808080" textLength="19.96" lengthAdjust="spacingAndGlyphs">−30</text><circle cx="912.91" cy="421.05" r="1.0" fill="none" stroke="#808080" stroke-width="0.7" opacity="0.8"/><text x="889.30" y="525.20" font-size="11.0" fill="#808080" textLength="19.96" lengthAdjust="spacingAndGlyphs">−60</text><circle cx="912.91" cy="518.60" r="1.0" fill="none" stroke="#808080" stroke-width="0.7" opacity="0.8"/><text x="889.30" y="623.95" font-size="11.0" fill="#808080" textLength="19.96" lengthAdjust="spacingAndGlyphs">−90</text><circle cx="912.91" cy="617.35" r="1.0" fill="none" stroke="#808080" stroke-width="0.7" opacity="0.8"/><g fill="none" stroke="#8c8c8c" stroke-width="1.0" stroke-dasharray="1 2"><path d="M538.0 198.7C540.8 198.8 546.8 198.8 555.0 199.3C563.2 199.8 577.8 200.1 587.0 201.7C596.2 203.3 602.3 205.7 610.0 209.0C617.7 212.3 626.3 217.9 633.0 221.7C639.7 225.5 643.3 226.8 650.0 232.0C656.7 237.2 663.0 244.5 673.0 253.0C683.0 261.5 696.7 271.8 710.0 283.0C723.3 294.2 738.0 307.7 753.0 320.0C768.0 332.3 786.7 347.2 800.0 356.7C813.3 366.1 821.8 370.3 833.0 376.7C844.2 383.1 861.3 391.9 867.0 395.0"/><path d="M610.0 153.0C615.5 151.4 630.8 146.2 643.0 143.7C655.2 141.1 671.8 138.9 683.0 137.7C694.2 136.5 703.3 136.6 710.0 136.7C716.7 136.8 718.5 136.9 723.0 138.3C727.5 139.7 733.0 142.1 737.0 145.0C741.0 147.9 743.7 151.7 747.0 155.7C750.3 159.7 753.2 163.0 757.0 169.0C760.8 175.0 766.0 185.2 770.0 191.7C774.0 198.1 777.9 201.0 780.7 207.7C783.5 214.4 786.0 227.7 787.0 231.7"/><path d="M630.0 151.7C636.7 150.8 657.8 147.6 670.0 146.3C682.2 145.0 693.5 143.7 703.0 143.7C712.5 143.7 719.2 143.4 727.0 146.3C734.8 149.2 744.0 155.2 750.0 161.0C756.0 166.8 758.8 174.0 763.0 181.0C767.2 188.0 771.3 195.2 775.0 203.0C778.7 210.8 783.3 223.8 785.0 228.0"/><path d="M640.0 149.0C645.3 148.0 662.0 144.5 672.0 143.0C682.0 141.5 691.7 140.2 700.0 140.0C708.3 139.8 715.0 139.7 722.0 141.5C729.0 143.3 736.2 145.9 742.0 151.0C747.8 156.1 752.0 164.2 757.0 172.0C762.0 179.8 769.5 193.7 772.0 198.0" opacity="0.7"/></g><path d="M523.3 200.2 L538.3 198.7" stroke="#b8b8b8" stroke-width="1.3"/><path d="M781.5 205 L783.5 207.5" stroke="#c0c0c0" stroke-width="1.6"/><text x="315.2" y="29.8" font-family="Liberation Mono, monospace" style="font-family:'Liberation Mono',monospace" font-size="13.33" fill="#fff" textLength="50.17" lengthAdjust="spacingAndGlyphs">US004M</text><text x="315.2" y="43.2" font-family="Liberation Mono, monospace" style="font-family:'Liberation Mono',monospace" font-size="13.33" fill="#fff" textLength="317.75" lengthAdjust="spacingAndGlyphs">Beg: 20251009 02:35:54 (sol = 195.71°)</text><text x="315.2" y="56.9" font-family="Liberation Mono, monospace" style="font-family:'Liberation Mono',monospace" font-size="13.33" fill="#fff" textLength="317.75" lengthAdjust="spacingAndGlyphs">End: 20251009 10:29:16 (sol = 196.03°)</text><text x="315.2" y="68.6" font-family="Liberation Mono, monospace" style="font-family:'Liberation Mono',monospace" font-size="13.33" fill="#fff" textLength="317.75" lengthAdjust="spacingAndGlyphs">--------------------------------------</text><text x="315.2" y="81.9" font-family="Liberation Mono, monospace" style="font-family:'Liberation Mono',monospace" font-size="13.33" fill="#fff" textLength="50.17" lengthAdjust="spacingAndGlyphs">...: 4</text><text transform="translate(149.83,697.25) rotate(-90)" x="0" y="0" font-size="30.34" fill="#555555" textLength="54.15" lengthAdjust="spacingAndGlyphs">APR</text><text transform="translate(293.83,700.80) rotate(-90)" x="0" y="0" font-size="30.34" fill="#555555" textLength="57.00" lengthAdjust="spacingAndGlyphs">MAY</text><text transform="translate(438.83,690.53) rotate(-90)" x="0" y="0" font-size="30.34" fill="#555555" textLength="48.13" lengthAdjust="spacingAndGlyphs">JUN</text><text transform="translate(578.83,682.69) rotate(-90)" x="0" y="0" font-size="30.34" fill="#555555" textLength="42.59" lengthAdjust="spacingAndGlyphs">JUL</text><text transform="translate(723.33,703.32) rotate(-90)" x="0" y="0" font-size="30.34" fill="#555555" textLength="60.22" lengthAdjust="spacingAndGlyphs">AUG</text><text transform="translate(871.83,694.69) rotate(-90)" x="0" y="0" font-size="30.34" fill="#555555" textLength="50.89" lengthAdjust="spacingAndGlyphs">SEP</text><text transform="translate(1016.33,699.57) rotate(-90)" x="0" y="0" font-size="30.34" fill="#555555" textLength="57.47" lengthAdjust="spacingAndGlyphs">OCT</text><text transform="translate(1169.43,704.33) rotate(-90)" x="0" y="0" font-size="30.34" fill="#555555" textLength="60.53" lengthAdjust="spacingAndGlyphs">NOV</text><text transform="translate(1318.03,701.98) rotate(-90)" x="0" y="0" font-size="30.34" fill="#555555" textLength="57.58" lengthAdjust="spacingAndGlyphs">DEC</text><text transform="translate(1471.83,688.13) rotate(-90)" x="0" y="0" font-size="30.34" fill="#555555" textLength="46.23" lengthAdjust="spacingAndGlyphs">JAN</text><text transform="translate(1628.43,697.87) rotate(-90)" x="0" y="0" font-size="30.34" fill="#555555" textLength="51.57" lengthAdjust="spacingAndGlyphs">FEB</text><text transform="translate(1766.33,706.80) rotate(-90)" x="0" y="0" font-size="30.34" fill="#555555" textLength="61.70" lengthAdjust="spacingAndGlyphs">MAR</text><rect x="106.2" y="832.00" width="22.60" height="4" fill="#bddf26"/><rect x="165" y="832.00" width="180.00" height="4" fill="#bddf26"/><rect x="366.2" y="832.00" width="258.80" height="4" fill="#bddf26"/><rect x="635" y="832.00" width="150.80" height="4" fill="#bddf26"/><rect x="807" y="832.00" width="91.80" height="4" fill="#bddf26"/><rect x="920" y="832.00" width="53.00" height="4" fill="#bddf26"/><rect x="984.2" y="832.00" width="81.60" height="4" fill="#bddf26"/><rect x="1082.2" y="832.00" width="120.80" height="4" fill="#bddf26"/><rect x="1244.2" y="832.00" width="81.60" height="4" fill="#bddf26"/><rect x="1337.2" y="832.00" width="17.80" height="4" fill="#bddf26"/><rect x="1381.2" y="832.00" width="62.60" height="4" fill="#bddf26"/><rect x="1459.2" y="832.00" width="52.80" height="4" fill="#bddf26"/><rect x="1523" y="832.00" width="24.00" height="4" fill="#bddf26"/><rect x="1724.1" y="832.00" width="23.90" height="4" fill="#bddf26"/><rect x="1758" y="832.00" width="24.00" height="4" fill="#bddf26"/><rect x="165" y="816.00" width="23.00" height="4" fill="#81d34d"/><rect x="223" y="816.00" width="62.80" height="4" fill="#81d34d"/><rect x="312.2" y="816.00" width="27.80" height="4" fill="#81d34d"/><rect x="366.2" y="816.00" width="125.80" height="4" fill="#81d34d"/><rect x="508" y="816.00" width="145.80" height="4" fill="#81d34d"/><rect x="704.2" y="816.00" width="32.80" height="4" fill="#81d34d"/><rect x="773" y="816.00" width="72.00" height="4" fill="#81d34d"/><rect x="871.2" y="816.00" width="116.80" height="4" fill="#81d34d"/><rect x="1003" y="816.00" width="13.70" height="4" fill="#81d34d"/><rect x="1062.2" y="816.00" width="150.60" height="4" fill="#81d34d"/><rect x="1244.2" y="816.00" width="22.80" height="4" fill="#81d34d"/><rect x="1293" y="816.00" width="22.80" height="4" fill="#81d34d"/><rect x="1342.2" y="816.00" width="22.80" height="4" fill="#81d34d"/><rect x="1386.2" y="816.00" width="42.60" height="4" fill="#81d34d"/><rect x="1459.2" y="816.00" width="23.80" height="4" fill="#81d34d"/><rect x="1548" y="816.00" width="22.80" height="4" fill="#81d34d"/><rect x="165" y="800.00" width="23.00" height="4" fill="#4ec36b"/><rect x="258" y="800.00" width="229.00" height="4" fill="#4ec36b"/><rect x="508" y="800.00" width="107.00" height="4" fill="#4ec36b"/><rect x="626.2" y="800.00" width="91.80" height="4" fill="#4ec36b"/><rect x="729.2" y="800.00" width="97.00" height="4" fill="#4ec36b"/><rect x="949.2" y="800.00" width="199.60" height="4" fill="#4ec36b"/><rect x="1160" y="800.00" width="88.00" height="4" fill="#4ec36b"/><rect x="1258" y="800.00" width="185.80" height="4" fill="#4ec36b"/><rect x="1459.2" y="800.00" width="23.80" height="4" fill="#4ec36b"/><rect x="1552.2" y="800.00" width="23.60" height="4" fill="#4ec36b"/><rect x="194.2" y="783.00" width="23.80" height="4" fill="#2ab07f"/><rect x="320.8" y="783.00" width="186.20" height="4" fill="#2ab07f"/><rect x="518" y="783.00" width="23.20" height="4" fill="#2ab07f"/><rect x="557.2" y="783.00" width="125.80" height="4" fill="#2ab07f"/><rect x="807" y="783.00" width="24.20" height="4" fill="#2ab07f"/><rect x="954.2" y="783.00" width="18.80" height="4" fill="#2ab07f"/><rect x="988" y="783.00" width="137.00" height="4" fill="#2ab07f"/><rect x="1155" y="783.00" width="63.00" height="4" fill="#2ab07f"/><rect x="1244.2" y="783.00" width="22.80" height="4" fill="#2ab07f"/><rect x="1317.2" y="783.00" width="23.60" height="4" fill="#2ab07f"/><rect x="1396.2" y="783.00" width="22.60" height="4" fill="#2ab07f"/><rect x="1464.2" y="783.00" width="185.80" height="4" fill="#2ab07f"/><rect x="341.2" y="767.00" width="28.80" height="4" fill="#1e9b8a"/><rect x="410" y="767.00" width="38.00" height="4" fill="#1e9b8a"/><rect x="469.2" y="767.00" width="22.80" height="4" fill="#1e9b8a"/><rect x="527" y="767.00" width="19.20" height="4" fill="#1e9b8a"/><rect x="562" y="767.00" width="28.00" height="4" fill="#1e9b8a"/><rect x="616.2" y="767.00" width="33.00" height="4" fill="#1e9b8a"/><rect x="959.2" y="767.00" width="28.80" height="4" fill="#1e9b8a"/><rect x="1062.2" y="767.00" width="23.60" height="4" fill="#1e9b8a"/><rect x="1101.2" y="767.00" width="23.80" height="4" fill="#1e9b8a"/><rect x="1160" y="767.00" width="33.80" height="4" fill="#1e9b8a"/><rect x="1248" y="767.00" width="24.00" height="4" fill="#1e9b8a"/><rect x="1425" y="767.00" width="87.00" height="4" fill="#1e9b8a"/><rect x="420" y="750.00" width="23.00" height="4" fill="#25858e"/><rect x="532.2" y="750.00" width="23.60" height="4" fill="#25858e"/><rect x="567.2" y="750.00" width="22.80" height="4" fill="#25858e"/><rect x="620.8" y="750.00" width="121.20" height="4" fill="#25858e"/><rect x="969.2" y="750.00" width="165.80" height="4" fill="#25858e"/><rect x="1185" y="750.00" width="160.80" height="4" fill="#25858e"/><rect x="1469.2" y="750.00" width="23.60" height="4" fill="#25858e"/><rect x="429.2" y="734.00" width="23.80" height="4" fill="#2d708e"/><rect x="576.2" y="734.00" width="156.80" height="4" fill="#2d708e"/><rect x="993" y="734.00" width="112.00" height="4" fill="#2d708e"/><rect x="1116.2" y="734.00" width="106.80" height="4" fill="#2d708e"/><rect x="1263" y="734.00" width="29.00" height="4" fill="#2d708e"/><rect x="1488.8" y="734.00" width="23.20" height="4" fill="#2d708e"/><rect x="591.2" y="718.00" width="23.80" height="4" fill="#375a8c"/><rect x="655" y="718.00" width="117.00" height="4" fill="#375a8c"/><rect x="1072" y="718.00" width="170.80" height="4" fill="#375a8c"/><rect x="1263" y="718.00" width="24.00" height="4" fill="#375a8c"/><rect x="596.2" y="701.00" width="136.80" height="4" fill="#424086"/><rect x="1091.2" y="701.00" width="28.80" height="4" fill="#424086"/><rect x="1198.8" y="701.00" width="24.20" height="4" fill="#424086"/><rect x="1273" y="701.00" width="52.80" height="4" fill="#424086"/><rect x="1111.2" y="685.00" width="23.80" height="4" fill="#482475"/><g stroke="#ffffff" stroke-opacity="0.33" stroke-width="2.08" stroke-dasharray="2.0833 3.4375"><path d="M74.00 641.5L74.00 842.5"/><path d="M218.00 641.5L218.00 842.5"/><path d="M365.00 641.5L365.00 842.5"/><path d="M505.00 641.5L505.00 842.5"/><path d="M650.00 641.5L650.00 842.5"/><path d="M797.00 641.5L797.00 842.5"/><path d="M940.00 641.5L940.00 842.5"/><path d="M1091.00 641.5L1091.00 842.5"/><path d="M1239.00 641.5L1239.00 842.5"/><path d="M1394.00 641.5L1394.00 842.5"/><path d="M1548.00 641.5L1548.00 842.5"/><path d="M1687.00 641.5L1687.00 842.5"/></g><text x="106.86" y="832.00" font-size="11.28" fill="#e6e6e6" textLength="20.35" lengthAdjust="spacingAndGlyphs">KSE</text><text x="244.67" y="832.00" font-size="11.28" fill="#e6e6e6" textLength="19.81" lengthAdjust="spacingAndGlyphs">ETA</text><text x="483.14" y="832.00" font-size="11.28" fill="#e6e6e6" textLength="22.82" lengthAdjust="spacingAndGlyphs">NZC</text><text x="698.56" y="832.00" font-size="11.28" fill="#e6e6e6" textLength="23.47" lengthAdjust="spacingAndGlyphs">NDA</text><text x="842.87" y="832.00" font-size="11.28" fill="#e6e6e6" textLength="19.73" lengthAdjust="spacingAndGlyphs">SPE</text><text x="934.08" y="832.00" font-size="11.28" fill="#e6e6e6" textLength="23.13" lengthAdjust="spacingAndGlyphs">ARD</text><text x="1013.77" y="832.00" font-size="11.28" fill="#e6e6e6" textLength="21.65" lengthAdjust="spacingAndGlyphs">EGE</text><text x="1131.51" y="832.00" font-size="11.28" fill="#e6e6e6" textLength="21.09" lengthAdjust="spacingAndGlyphs">NTA</text><text x="1271.14" y="832.00" font-size="11.28" fill="#e6e6e6" textLength="25.72" lengthAdjust="spacingAndGlyphs">MON</text><text x="1332.27" y="832.00" font-size="11.28" fill="#e6e6e6" textLength="22.10" lengthAdjust="spacingAndGlyphs">URS</text><text x="1400.81" y="832.00" font-size="11.28" fill="#e6e6e6" textLength="22.39" lengthAdjust="spacingAndGlyphs">AHY</text><text x="1473.07" y="832.00" font-size="11.28" fill="#e6e6e6" textLength="25.51" lengthAdjust="spacingAndGlyphs">GUM</text><text x="1523.56" y="832.00" font-size="11.28" fill="#e6e6e6" textLength="23.51" lengthAdjust="spacingAndGlyphs">OHY</text><text x="1725.04" y="832.00" font-size="11.28" fill="#e6e6e6" textLength="22.11" lengthAdjust="spacingAndGlyphs">XHE</text><text x="1760.99" y="832.00" font-size="11.28" fill="#e6e6e6" textLength="17.21" lengthAdjust="spacingAndGlyphs">EVI</text><text x="164.90" y="815.00" font-size="11.28" fill="#e6e6e6" textLength="21.35" lengthAdjust="spacingAndGlyphs">AVB</text><text x="245.66" y="815.00" font-size="11.28" fill="#e6e6e6" textLength="18.06" lengthAdjust="spacingAndGlyphs">ELY</text><text x="312.01" y="815.00" font-size="11.28" fill="#e6e6e6" textLength="24.14" lengthAdjust="spacingAndGlyphs">CAM</text><text x="421.34" y="815.00" font-size="11.28" fill="#e6e6e6" textLength="21.82" lengthAdjust="spacingAndGlyphs">SSG</text><text x="567.65" y="815.00" font-size="11.28" fill="#e6e6e6" textLength="21.26" lengthAdjust="spacingAndGlyphs">PCA</text><text x="708.88" y="815.00" font-size="11.28" fill="#e6e6e6" textLength="23.52" lengthAdjust="spacingAndGlyphs">AUD</text><text x="796.93" y="815.00" font-size="11.28" fill="#e6e6e6" textLength="23.02" lengthAdjust="spacingAndGlyphs">AUR</text><text x="919.57" y="815.00" font-size="11.28" fill="#e6e6e6" textLength="22.40" lengthAdjust="spacingAndGlyphs">DSX</text><text x="998.03" y="815.00" font-size="11.28" fill="#e6e6e6" textLength="23.85" lengthAdjust="spacingAndGlyphs">OCU</text><text x="1125.68" y="815.00" font-size="11.28" fill="#e6e6e6" textLength="23.03" lengthAdjust="spacingAndGlyphs">OER</text><text x="1242.78" y="815.00" font-size="11.28" fill="#e6e6e6" textLength="23.54" lengthAdjust="spacingAndGlyphs">DKD</text><text x="1292.69" y="815.00" font-size="11.28" fill="#e6e6e6" textLength="22.45" lengthAdjust="spacingAndGlyphs">DSV</text><text x="1343.88" y="815.00" font-size="11.28" fill="#e6e6e6" textLength="18.82" lengthAdjust="spacingAndGlyphs">ALY</text><text x="1399.37" y="815.00" font-size="11.28" fill="#e6e6e6" textLength="16.53" lengthAdjust="spacingAndGlyphs">JLE</text><text x="1460.91" y="815.00" font-size="11.28" fill="#e6e6e6" textLength="21.58" lengthAdjust="spacingAndGlyphs">SCC</text><text x="1548.36" y="815.00" font-size="11.28" fill="#e6e6e6" textLength="20.28" lengthAdjust="spacingAndGlyphs">FEV</text><text x="166.58" y="799.00" font-size="11.28" fill="#e6e6e6" textLength="18.67" lengthAdjust="spacingAndGlyphs">LYR</text><text x="362.49" y="799.00" font-size="11.28" fill="#e6e6e6" textLength="20.66" lengthAdjust="spacingAndGlyphs">JMC</text><text x="550.23" y="799.00" font-size="11.28" fill="#e6e6e6" textLength="16.99" lengthAdjust="spacingAndGlyphs">JPE</text><text x="660.83" y="799.00" font-size="11.28" fill="#e6e6e6" textLength="20.88" lengthAdjust="spacingAndGlyphs">PAU</text><text x="764.55" y="799.00" font-size="11.28" fill="#e6e6e6" textLength="18.52" lengthAdjust="spacingAndGlyphs">NIA</text><text x="1039.73" y="799.00" font-size="11.28" fill="#e6e6e6" textLength="19.80" lengthAdjust="spacingAndGlyphs">STA</text><text x="1192.94" y="799.00" font-size="11.28" fill="#e6e6e6" textLength="24.95" lengthAdjust="spacingAndGlyphs">NOO</text><text x="1340.85" y="799.00" font-size="11.28" fill="#e6e6e6" textLength="25.26" lengthAdjust="spacingAndGlyphs">COM</text><text x="1459.00" y="799.00" font-size="11.28" fill="#e6e6e6" textLength="22.90" lengthAdjust="spacingAndGlyphs">NCC</text><text x="1552.41" y="799.00" font-size="11.28" fill="#e6e6e6" textLength="21.12" lengthAdjust="spacingAndGlyphs">FED</text><text x="195.75" y="782.90" font-size="11.28" fill="#e6e6e6" textLength="18.60" lengthAdjust="spacingAndGlyphs">HVI</text><text x="403.46" y="782.90" font-size="11.28" fill="#e6e6e6" textLength="18.06" lengthAdjust="spacingAndGlyphs">ARI</text><text x="519.01" y="782.90" font-size="11.28" fill="#e6e6e6" textLength="21.50" lengthAdjust="spacingAndGlyphs">SZC</text><text x="606.93" y="782.90" font-size="11.28" fill="#e6e6e6" textLength="21.65" lengthAdjust="spacingAndGlyphs">CAP</text><text x="806.84" y="782.90" font-size="11.28" fill="#e6e6e6" textLength="22.48" lengthAdjust="spacingAndGlyphs">NUE</text><text x="949.64" y="782.90" font-size="11.28" fill="#e6e6e6" textLength="22.96" lengthAdjust="spacingAndGlyphs">OCT</text><text x="1049.97" y="782.90" font-size="11.28" fill="#e6e6e6" textLength="19.14" lengthAdjust="spacingAndGlyphs">ORI</text><text x="1174.06" y="782.90" font-size="11.28" fill="#e6e6e6" textLength="25.19" lengthAdjust="spacingAndGlyphs">AMO</text><text x="1243.72" y="782.90" font-size="11.28" fill="#e6e6e6" textLength="22.07" lengthAdjust="spacingAndGlyphs">DPC</text><text x="1320.61" y="782.90" font-size="11.28" fill="#e6e6e6" textLength="17.96" lengthAdjust="spacingAndGlyphs">XVI</text><text x="1395.57" y="782.90" font-size="11.28" fill="#e6e6e6" textLength="23.76" lengthAdjust="spacingAndGlyphs">QUA</text><text x="1548.52" y="782.90" font-size="11.28" fill="#e6e6e6" textLength="23.04" lengthAdjust="spacingAndGlyphs">AAN</text><text x="343.18" y="766.00" font-size="11.28" fill="#e6e6e6" textLength="21.53" lengthAdjust="spacingAndGlyphs">TAH</text><text x="422.37" y="766.00" font-size="11.28" fill="#e6e6e6" textLength="18.12" lengthAdjust="spacingAndGlyphs">JEA</text><text x="473.58" y="766.00" font-size="11.28" fill="#e6e6e6" textLength="13.80" lengthAdjust="spacingAndGlyphs">JIP</text><text x="529.04" y="766.00" font-size="11.28" fill="#e6e6e6" textLength="19.54" lengthAdjust="spacingAndGlyphs">PPS</text><text x="568.00" y="766.00" font-size="11.28" fill="#e6e6e6" textLength="21.64" lengthAdjust="spacingAndGlyphs">ZCS</text><text x="620.51" y="766.00" font-size="11.28" fill="#e6e6e6" textLength="24.45" lengthAdjust="spacingAndGlyphs">GDR</text><text x="958.50" y="766.00" font-size="11.28" fill="#e6e6e6" textLength="22.63" lengthAdjust="spacingAndGlyphs">DRA</text><text x="1062.07" y="766.00" font-size="11.28" fill="#e6e6e6" textLength="22.47" lengthAdjust="spacingAndGlyphs">LUM</text><text x="1102.05" y="766.00" font-size="11.28" fill="#e6e6e6" textLength="21.65" lengthAdjust="spacingAndGlyphs">RPU</text><text x="1165.08" y="766.00" font-size="11.28" fill="#e6e6e6" textLength="22.41" lengthAdjust="spacingAndGlyphs">THA</text><text x="1248.82" y="766.00" font-size="11.28" fill="#e6e6e6" textLength="20.99" lengthAdjust="spacingAndGlyphs">PSU</text><text x="1460.14" y="766.00" font-size="11.28" fill="#e6e6e6" textLength="21.32" lengthAdjust="spacingAndGlyphs">XCB</text><text x="422.48" y="749.70" font-size="11.28" fill="#e6e6e6" textLength="18.25" lengthAdjust="spacingAndGlyphs">JRC</text><text x="532.88" y="749.70" font-size="11.28" fill="#e6e6e6" textLength="22.88" lengthAdjust="spacingAndGlyphs">CAN</text><text x="567.70" y="749.70" font-size="11.28" fill="#e6e6e6" textLength="20.39" lengthAdjust="spacingAndGlyphs">FAN</text><text x="670.63" y="749.70" font-size="11.28" fill="#e6e6e6" textLength="20.86" lengthAdjust="spacingAndGlyphs">PER</text><text x="1038.56" y="749.70" font-size="11.28" fill="#e6e6e6" textLength="20.64" lengthAdjust="spacingAndGlyphs">CTA</text><text x="1252.69" y="749.70" font-size="11.28" fill="#e6e6e6" textLength="22.82" lengthAdjust="spacingAndGlyphs">HYD</text><text x="1469.17" y="749.70" font-size="11.28" fill="#e6e6e6" textLength="24.51" lengthAdjust="spacingAndGlyphs">XUM</text><text x="429.60" y="733.00" font-size="11.28" fill="#e6e6e6" textLength="23.77" lengthAdjust="spacingAndGlyphs">COR</text><text x="645.58" y="733.00" font-size="11.28" fill="#e6e6e6" textLength="22.17" lengthAdjust="spacingAndGlyphs">SDA</text><text x="1039.84" y="733.00" font-size="11.28" fill="#e6e6e6" textLength="18.42" lengthAdjust="spacingAndGlyphs">LMI</text><text x="1155.94" y="733.00" font-size="11.28" fill="#e6e6e6" textLength="21.16" lengthAdjust="spacingAndGlyphs">LEO</text><text x="1263.67" y="733.00" font-size="11.28" fill="#e6e6e6" textLength="21.71" lengthAdjust="spacingAndGlyphs">EHY</text><text x="1488.54" y="733.00" font-size="11.28" fill="#e6e6e6" textLength="21.60" lengthAdjust="spacingAndGlyphs">ECV</text><text x="593.08" y="717.00" font-size="11.28" fill="#e6e6e6" textLength="18.69" lengthAdjust="spacingAndGlyphs">JXA</text><text x="703.88" y="717.00" font-size="11.28" fill="#e6e6e6" textLength="22.17" lengthAdjust="spacingAndGlyphs">KCG</text><text x="1145.04" y="717.00" font-size="11.28" fill="#e6e6e6" textLength="23.71" lengthAdjust="spacingAndGlyphs">AND</text><text x="1262.70" y="717.00" font-size="11.28" fill="#e6e6e6" textLength="23.69" lengthAdjust="spacingAndGlyphs">DAD</text><text x="657.65" y="700.90" font-size="11.28" fill="#e6e6e6" textLength="17.30" lengthAdjust="spacingAndGlyphs">ERI</text><text x="1097.85" y="700.90" font-size="11.28" fill="#e6e6e6" textLength="20.94" lengthAdjust="spacingAndGlyphs">SLD</text><text x="1199.86" y="700.90" font-size="11.28" fill="#e6e6e6" textLength="22.75" lengthAdjust="spacingAndGlyphs">ORS</text><text x="1287.13" y="700.90" font-size="11.28" fill="#e6e6e6" textLength="24.40" lengthAdjust="spacingAndGlyphs">GEM</text><text x="1111.07" y="683.90" font-size="11.28" fill="#e6e6e6" textLength="23.76" lengthAdjust="spacingAndGlyphs">KUM</text><path d="M979.50 641.5L979.50 842.5" stroke="#ff0000" stroke-width="1.0" stroke-dasharray="5.14 2.22" stroke-dashoffset="2.8"/><path d="M981.50 641.5L981.50 842.5" stroke="#ff0000" stroke-width="1.0" stroke-dasharray="5.14 2.22" stroke-dashoffset="2.8"/><g stroke="#fff" stroke-width="2.1" fill="none"><path d="M113.00 834.00H121.00M117.00 830.00V838.00"/><path d="M241.00 834.00H249.00M245.00 830.00V838.00"/><path d="M511.00 834.00H519.00M515.00 830.00V838.00"/><path d="M706.80 834.00H714.80M710.80 830.00V838.00"/><path d="M832.70 834.00H840.70M836.70 830.00V838.00"/><path d="M962.20 834.00H970.20M966.20 830.00V838.00"/><path d="M985.70 834.00H993.70M989.70 830.00V838.00"/><path d="M1115.70 834.00H1123.70M1119.70 830.00V838.00"/><path d="M1294.80 834.00H1302.80M1298.80 830.00V838.00"/><path d="M1341.80 834.00H1349.80M1345.80 830.00V838.00"/><path d="M1412.70 834.00H1420.70M1416.70 830.00V838.00"/><path d="M1481.80 834.00H1489.80M1485.80 830.00V838.00"/><path d="M1530.70 834.00H1538.70M1534.70 830.00V838.00"/><path d="M1731.80 834.00H1739.80M1735.80 830.00V838.00"/><path d="M1765.80 834.00H1773.80M1769.80 830.00V838.00"/><path d="M171.80 818.00H179.80M175.80 814.00V822.00"/><path d="M255.70 818.00H263.70M259.70 814.00V822.00"/><path d="M323.00 818.00H331.00M327.00 814.00V822.00"/><path d="M436.80 818.00H444.80M440.80 814.00V822.00"/><path d="M599.00 818.00H607.00M603.00 814.00V822.00"/><path d="M716.80 818.00H724.80M720.80 814.00V822.00"/><path d="M792.70 818.00H800.70M796.70 814.00V822.00"/><path d="M938.80 818.00H946.80M942.80 814.00V822.00"/><path d="M1006.00 818.00H1014.00M1010.00 814.00V822.00"/><path d="M1152.70 818.00H1160.70M1156.70 814.00V822.00"/><path d="M1250.70 818.00H1258.70M1254.70 814.00V822.00"/><path d="M1299.80 818.00H1307.80M1303.80 814.00V822.00"/><path d="M1349.00 818.00H1357.00M1353.00 814.00V822.00"/><path d="M1402.70 818.00H1410.70M1406.70 814.00V822.00"/><path d="M1466.80 818.00H1474.80M1470.80 814.00V822.00"/><path d="M1554.70 818.00H1562.70M1558.70 814.00V822.00"/><path d="M174.00 802.00H182.00M178.00 798.00V806.00"/><path d="M377.70 802.00H385.70M381.70 798.00V806.00"/><path d="M544.80 802.00H552.80M548.80 798.00V806.00"/><path d="M681.80 802.00H689.80M685.80 798.00V806.00"/><path d="M741.00 802.00H749.00M745.00 798.00V806.00"/><path d="M1074.80 802.00H1082.80M1078.80 798.00V806.00"/><path d="M1216.80 802.00H1224.80M1220.80 798.00V806.00"/><path d="M1304.80 802.00H1312.80M1308.80 798.00V806.00"/><path d="M1466.80 802.00H1474.80M1470.80 798.00V806.00"/><path d="M1559.80 802.00H1567.80M1563.80 798.00V806.00"/><path d="M201.80 785.00H209.80M205.80 781.00V789.00"/><path d="M399.70 785.00H407.70M403.70 781.00V789.00"/><path d="M524.70 785.00H532.70M528.70 781.00V789.00"/><path d="M639.00 785.00H647.00M643.00 781.00V789.00"/><path d="M814.80 785.00H822.80M818.80 781.00V789.00"/><path d="M959.00 785.00H967.00M963.00 781.00V789.00"/><path d="M1039.80 785.00H1047.80M1043.80 781.00V789.00"/><path d="M1188.00 785.00H1196.00M1192.00 781.00V789.00"/><path d="M1250.70 785.00H1258.70M1254.70 781.00V789.00"/><path d="M1324.80 785.00H1332.80M1328.80 781.00V789.00"/><path d="M1402.70 785.00H1410.70M1406.70 781.00V789.00"/><path d="M1545.70 785.00H1553.70M1549.70 781.00V789.00"/><path d="M355.70 769.00H363.70M359.70 765.00V773.00"/><path d="M425.70 769.00H433.70M429.70 765.00V773.00"/><path d="M475.70 769.00H483.70M479.70 765.00V773.00"/><path d="M534.80 769.00H542.80M538.80 765.00V773.00"/><path d="M571.00 769.00H579.00M575.00 765.00V773.00"/><path d="M630.70 769.00H638.70M634.70 765.00V773.00"/><path d="M974.00 769.00H982.00M978.00 765.00V773.00"/><path d="M1069.70 769.00H1077.70M1073.70 765.00V773.00"/><path d="M1109.00 769.00H1117.00M1113.00 765.00V773.00"/><path d="M1177.70 769.00H1185.70M1181.70 765.00V773.00"/><path d="M1255.70 769.00H1263.70M1259.70 765.00V773.00"/><path d="M1466.80 769.00H1474.80M1470.80 765.00V773.00"/><path d="M426.80 752.00H434.80M430.80 748.00V756.00"/><path d="M539.80 752.00H547.80M543.80 748.00V756.00"/><path d="M574.00 752.00H582.00M578.00 748.00V756.00"/><path d="M703.80 752.00H711.80M707.80 748.00V756.00"/><path d="M1093.80 752.00H1101.80M1097.80 748.00V756.00"/><path d="M1271.00 752.00H1279.00M1275.00 748.00V756.00"/><path d="M1476.80 752.00H1484.80M1480.80 748.00V756.00"/><path d="M436.80 736.00H444.80M440.80 732.00V740.00"/><path d="M630.70 736.00H638.70M634.70 732.00V740.00"/><path d="M1038.80 736.00H1046.80M1042.80 732.00V740.00"/><path d="M1167.70 736.00H1175.70M1171.70 732.00V740.00"/><path d="M1274.80 736.00H1282.80M1278.80 732.00V740.00"/><path d="M1496.80 736.00H1504.80M1500.80 732.00V740.00"/><path d="M598.80 720.00H606.80M602.80 716.00V724.00"/><path d="M726.80 720.00H734.80M730.80 716.00V724.00"/><path d="M1187.70 720.00H1195.70M1191.70 716.00V724.00"/><path d="M1270.70 720.00H1278.70M1274.70 716.00V724.00"/><path d="M686.80 703.00H694.80M690.80 699.00V707.00"/><path d="M1101.80 703.00H1109.80M1105.80 699.00V707.00"/><path d="M1206.80 703.00H1214.80M1210.80 699.00V707.00"/><path d="M1299.80 703.00H1307.80M1303.80 699.00V707.00"/><path d="M1118.80 687.00H1126.80M1122.80 683.00V691.00"/></g><rect x="19.5" y="641.5" width="1766.0" height="201.0" fill="none" stroke="#fff" stroke-width="1.1"/><path d="M19.50 842.5V847.80" stroke="#fff" stroke-width="1.1"/><text x="15.11" y="862" font-size="14.58" fill="#fff" textLength="8.17" lengthAdjust="spacingAndGlyphs">0</text><path d="M265.50 842.5V847.80" stroke="#fff" stroke-width="1.1"/><text x="256.74" y="862" font-size="14.58" fill="#fff" textLength="16.91" lengthAdjust="spacingAndGlyphs">50</text><path d="M510.50 842.5V847.80" stroke="#fff" stroke-width="1.1"/><text x="497.01" y="862" font-size="14.58" fill="#fff" textLength="25.82" lengthAdjust="spacingAndGlyphs">100</text><path d="M755.50 842.5V847.80" stroke="#fff" stroke-width="1.1"/><text x="742.01" y="862" font-size="14.58" fill="#fff" textLength="25.82" lengthAdjust="spacingAndGlyphs">150</text><path d="M1000.50 842.5V847.80" stroke="#fff" stroke-width="1.1"/><text x="987.13" y="862" font-size="14.58" fill="#fff" textLength="25.96" lengthAdjust="spacingAndGlyphs">200</text><path d="M1246.50 842.5V847.80" stroke="#fff" stroke-width="1.1"/><text x="1233.13" y="862" font-size="14.58" fill="#fff" textLength="25.96" lengthAdjust="spacingAndGlyphs">250</text><path d="M1491.50 842.5V847.80" stroke="#fff" stroke-width="1.1"/><text x="1478.35" y="862" font-size="14.58" fill="#fff" textLength="25.72" lengthAdjust="spacingAndGlyphs">300</text><path d="M1736.50 842.5V847.80" stroke="#fff" stroke-width="1.1"/><text x="1723.35" y="862" font-size="14.58" fill="#fff" textLength="25.72" lengthAdjust="spacingAndGlyphs">350</text><text x="829.39" y="882" font-size="14.58" fill="#fff" textLength="146.27" lengthAdjust="spacingAndGlyphs">Solar longitude (deg)</text></svg></body></html>
